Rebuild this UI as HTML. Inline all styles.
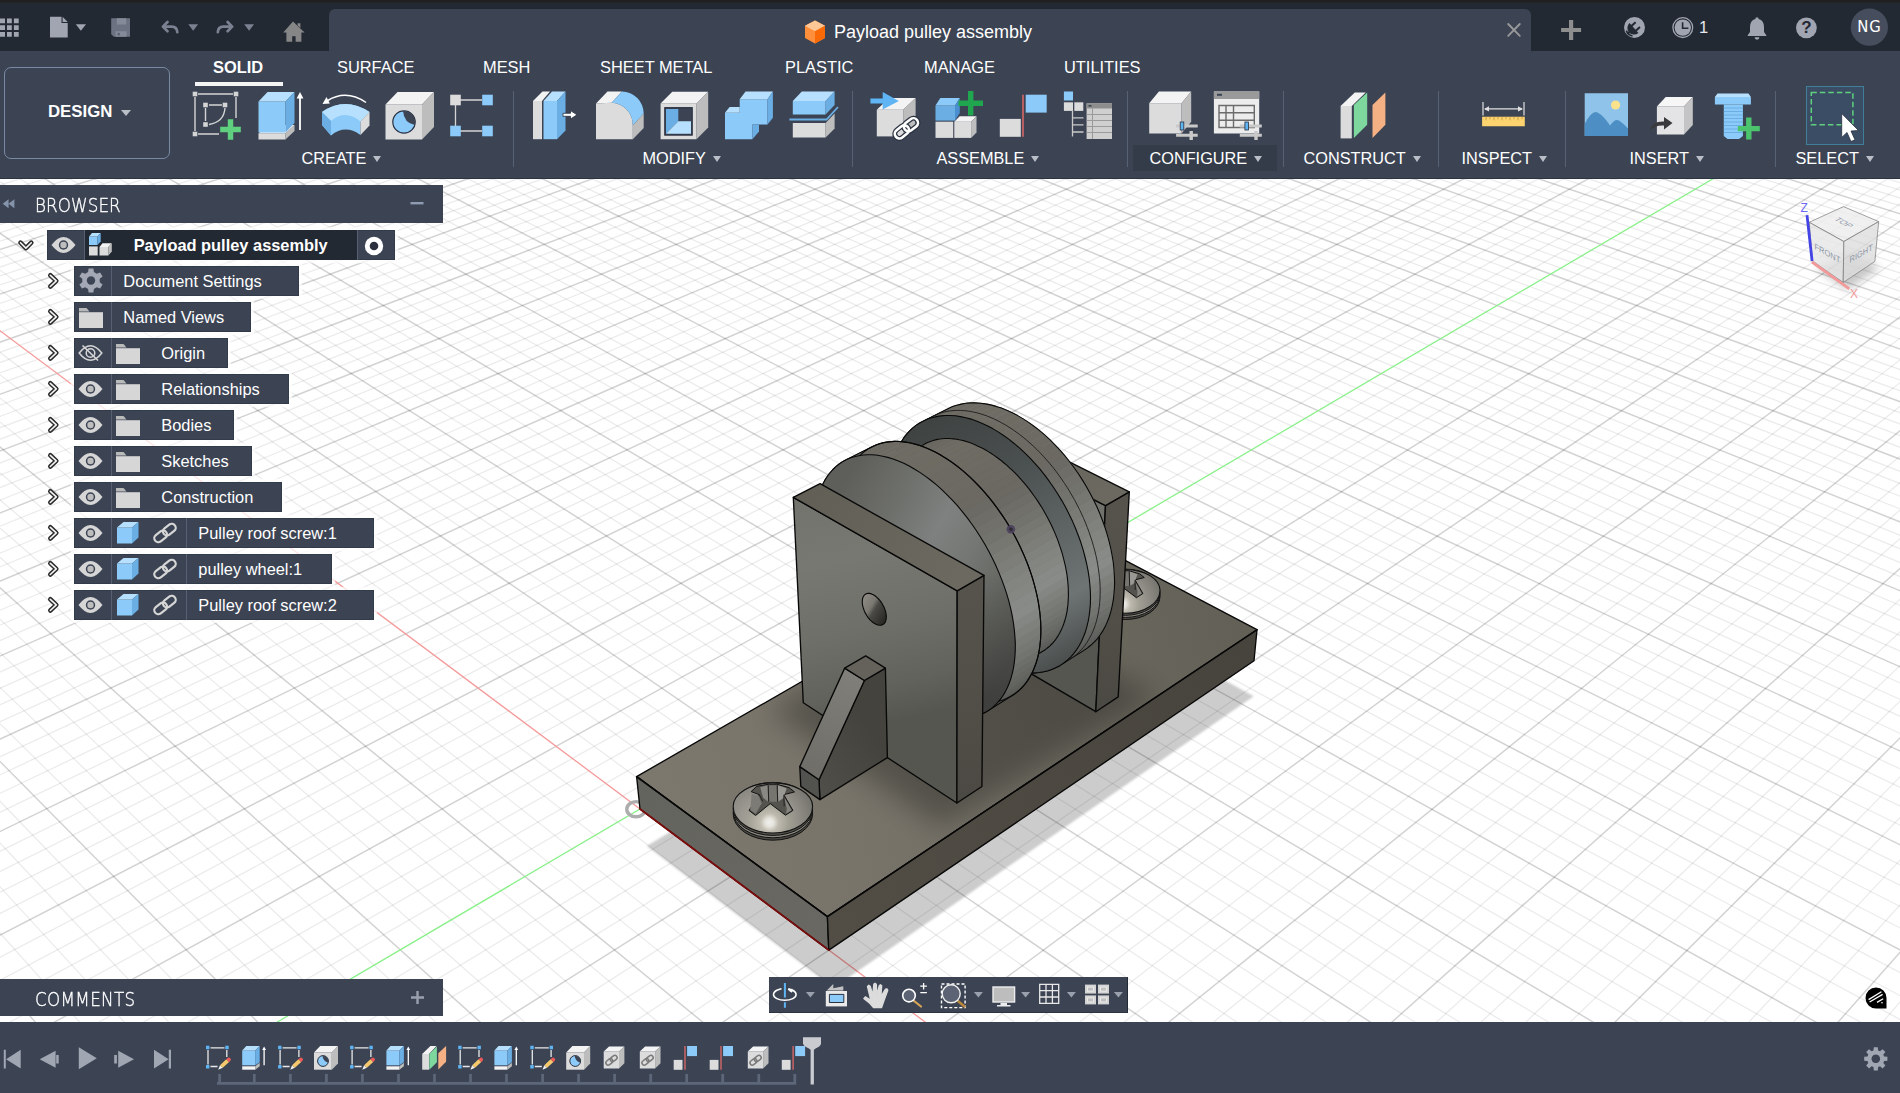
<!DOCTYPE html>
<html lang="en"><head><meta charset="utf-8"><title>Payload pulley assembly</title>
<style>
*{box-sizing:border-box}
html,body{margin:0;padding:0;overflow:hidden}
body{width:1900px;height:1093px;overflow:hidden;background:#fff;font-family:"Liberation Sans",sans-serif;color:#fff;position:relative}
.abs{position:absolute}
#strip{left:0;top:0;width:1900px;height:3px;background:linear-gradient(#202020 0,#202020 70%,#22272e 100%)}
#titlebar{left:0;top:3px;width:1900px;height:48px;background:#222933}
#tab{left:329px;top:9px;width:1202px;height:43px;background:#3c4454;border-radius:6px 6px 0 0}
#toolbar{left:0;top:51px;width:1900px;height:128px;background:#3c4454;border-bottom:1px solid #2d3441}
#doctitle{left:834px;top:21px;font-size:18px;line-height:22px;color:#fff;white-space:nowrap}
.wtab{position:absolute;top:56.6px;font-size:16.4px;line-height:20px;color:#fff;white-space:nowrap}
.glabel{position:absolute;top:148.4px;font-size:16.3px;margin-left:-0.5px;line-height:20px;color:#fff;white-space:nowrap}
.glabel i{display:inline-block;width:0;height:0;border-left:4.5px solid transparent;border-right:4.5px solid transparent;border-top:6px solid #b9bec7;margin-left:7px;vertical-align:2px}
.sep{position:absolute;top:91px;width:1px;height:76px;background:#566173}
.ico{position:absolute;overflow:visible}
#viewport{left:0;top:179px;width:1900px;height:843px;background:#fff;overflow:hidden}
#timeline{left:0;top:1022px;width:1900px;height:71px;background:#3c4454}
.panelhdr{position:absolute;left:0;width:443px;background:#3c4454;color:#fff;font-size:17px;letter-spacing:1px}
.row{position:absolute;height:30px;background:#3c4454;box-shadow:inset 0 0 0 1px #323b4a,0 0 1px 3px rgba(255,255,255,.72);font-size:16.4px;line-height:30px;color:#fff;white-space:nowrap}
.row .c{position:absolute;top:0;height:30px}
.row .t{position:absolute;top:0;height:30px;line-height:30px}
.cond{font-family:"DejaVu Sans Light","DejaVu Sans Condensed","Liberation Sans",sans-serif;transform:scaleX(.9);transform-origin:0 50%;-webkit-text-stroke:.35px #fff}
.chev{position:absolute;width:14px;height:20px}
</style></head><body>
<div id="strip" class="abs"></div>
<div id="titlebar" class="abs"></div>
<div id="tab" class="abs"></div>
<div id="toolbar" class="abs"></div>
<div id="doctitle" class="abs">Payload pulley assembly</div>
<svg class="abs" style="left:0;top:0" width="1900" height="52" viewBox="0 0 1900 52">
<g fill="#a1a5b1">
<path d="M0 18.5h5v4.7h-5zM7 18.5h4.8v4.7h-4.8zM13.9 18.5h4.8v4.7h-4.8zM0 25.3h5v4.7h-5zM7 25.3h4.8v4.7h-4.8zM13.9 25.3h4.8v4.7h-4.8zM0 32.1h5v4.7h-5zM7 32.1h4.8v4.7h-4.8zM13.9 32.1h4.8v4.7h-4.8z"/>
<path d="M50 16.8h11.5v6.2h6.2v14.4h-17.7zM62.6 16.8l5.1 5.1h-5.1z"/>
<path d="M75.8 24.2h10.2l-5.1 6.6z"/>
</g>
<g><path d="M111.200 18.200h18.800v18.600h-16.200l-2.600-2.600z" fill="#6d7282"/><path d="M116.800 18.200h9.400v6.400h-9.400zM115.600 31.200h11v5.600h-11z" fill="#858a99"/><rect x="117.600" y="32.800" width="2.200" height="2.600" fill="#5a5f6e"/></g>
<g fill="none" stroke="#7c8191" stroke-width="2.7" stroke-linejoin="round" stroke-linecap="round">
<path d="M167.5 22l-4.6 4.6 4.6 4.6M163.5 26.6h8.2q5.4.2 5.6 5.6"/>
<path d="M227.6 22l4.6 4.6-4.6 4.6M231.6 26.6h-8.2q-5.4.2-5.6 5.6"/>
</g>
<g fill="#7c8191"><path d="M188.3 24.2h9.8l-4.9 6.6zM244.2 24.2h9.8l-4.9 6.6z"/></g>
<path d="M293 21.400L304.600 32.600h-3.200v9.200h-5.800v-5.600h-3.400v5.600h-5.800v-9.200h-3.200zM297.600 23.200h2.800v4.800l-2.800-2.700z" fill="#868686"/>
<!-- right side icons -->
<g stroke="#9a9a9a" stroke-width="1.800" stroke-linecap="round"><path d="M1508.200 24l11.600 11.800M1519.800 24l-11.600 11.800"/></g>
<path d="M1569 20h4.200v7.900h7.900v4.200h-7.900v7.900h-4.200v-7.900h-7.900v-4.200h7.900z" fill="#8e8e8e"/>
<circle cx="1634.500" cy="27.400" r="10.500" fill="#a1a5b1"/>
<g transform="translate(1634 28) rotate(-42)" fill="#222933"><path d="M0 -6.600A6.600 6.600 0 0 0 0 6.600Z"/><rect x="-0.500" y="-4.300" width="5.600" height="2.100"/><rect x="-0.500" y="2.200" width="5.600" height="2.100"/><rect x="-9" y="-1" width="3" height="2"/></g>
<path d="M1626.300 30.600A8.700 8.700 0 0 0 1632.500 36" stroke="#222933" stroke-width="1.600" fill="none"/>
<circle cx="1682.800" cy="27.600" r="9.900" fill="none" stroke="#a1a5b1" stroke-width="1.300"/>
<circle cx="1682.800" cy="27.600" r="8.200" fill="#a1a5b1"/>
<path d="M1682.600 22.200v6h5.800" stroke="#222933" stroke-width="1.600" fill="none"/>
<path d="M1757 17.200a1.700 1.700 0 0 1 1.700 1.700q5.300 1.500 5.300 8v5.200l2.300 3.100v.9h-18.600v-.9l2.300-3.100v-5.200q0-6.500 5.300-8a1.700 1.700 0 0 1 1.700-1.700zM1754.600 37.300h4.800a2.400 2.400 0 0 1-4.800 0z" fill="#a1a5b1"/>
<circle cx="1806.400" cy="27.800" r="10.400" fill="#a1a5b1"/>
<circle cx="1869.400" cy="27.200" r="18.600" fill="#464e5e"/>
</svg>
<div class="abs" style="left:1699px;top:17px;font-size:16.500px;line-height:20px;color:#e8e8ec">1</div>
<div class="abs" style="left:1800px;top:17px;width:13px;text-align:center;font-size:17px;line-height:21px;font-weight:bold;color:#222933">?</div>
<div class="abs" style="left:1851px;top:16px;width:37px;text-align:center;font-size:16.500px;line-height:22px;color:#fff;letter-spacing:1px;font-family:'DejaVu Sans Condensed','Liberation Sans',sans-serif">NG</div>
<svg class="abs" style="left:803px;top:19px" width="24" height="26" viewBox="0 0 24 26"><path d="M12 1.500L22 6.800V19L12 24.500L2 19V6.800Z" fill="#ff8f3a"/><path d="M12 1.500L22 6.800L12 12.200L2 6.800Z" fill="#ffc696"/><path d="M12 12.200L22 6.800V19L12 24.500Z" fill="#f96a06"/></svg>
<div class="abs" style="left:4px;top:66.500px;width:166px;height:92px;border:1px solid #788aa3;border-radius:7px"></div>
<div class="abs" style="left:48px;top:101.500px;font-size:16.800px;line-height:20px;font-weight:bold;color:#fff">DESIGN</div>
<div class="abs" style="left:121px;top:110px;width:0;height:0;border-left:5px solid transparent;border-right:5px solid transparent;border-top:6px solid #b9bec7"></div>
<div class="wtab" style="left:213px;font-weight:bold;">SOLID</div>
<div class="wtab" style="left:337px;">SURFACE</div>
<div class="wtab" style="left:483px;">MESH</div>
<div class="wtab" style="left:600px;">SHEET METAL</div>
<div class="wtab" style="left:785px;">PLASTIC</div>
<div class="wtab" style="left:924px;">MANAGE</div>
<div class="wtab" style="left:1064px;">UTILITIES</div>
<div class="abs" style="left:195px;top:82px;width:88px;height:4px;background:#f4f4f4"></div>
<div class="abs" style="left:1133px;top:145px;width:144px;height:26px;background:#343c4a"></div>
<div class="glabel" style="left:302px">CREATE<i></i></div>
<div class="glabel" style="left:643px">MODIFY<i></i></div>
<div class="glabel" style="left:937px">ASSEMBLE<i></i></div>
<div class="glabel" style="left:1150px">CONFIGURE<i></i></div>
<div class="glabel" style="left:1304px">CONSTRUCT<i></i></div>
<div class="glabel" style="left:1462px">INSPECT<i></i></div>
<div class="glabel" style="left:1630px">INSERT<i></i></div>
<div class="glabel" style="left:1796px">SELECT<i></i></div>
<div class="sep" style="left:513px"></div>
<div class="sep" style="left:852px"></div>
<div class="sep" style="left:1127px"></div>
<div class="sep" style="left:1283px"></div>
<div class="sep" style="left:1438px"></div>
<div class="sep" style="left:1565px"></div>
<div class="sep" style="left:1775px"></div>
<div class="abs" style="left:1806px;top:86px;width:58px;height:59px;background:#3a4d64;border:1px solid #3f7f98"></div>
<svg class="abs" style="left:0;top:0" width="1900" height="179" viewBox="0 0 1900 179"><path d="M198 94H233M195 97V131M236 97V118M198 134H219" stroke="#d4d4d4" stroke-width="1.4" fill="none"/><rect x="192.7" y="91.7" width="4.6" height="4.6" fill="#d4d4d4"/><rect x="233.7" y="91.7" width="4.6" height="4.6" fill="#d4d4d4"/><rect x="192.7" y="131.7" width="4.6" height="4.6" fill="#d4d4d4"/><path d="M209 105H222M205.5 108V121M225 108Q224 122 209 124.5" stroke="#d4d4d4" stroke-width="1.4" fill="none"/><rect x="203.2" y="102.7" width="4.6" height="4.6" fill="#d4d4d4"/><rect x="222.7" y="102.7" width="4.6" height="4.6" fill="#d4d4d4"/><rect x="203.2" y="122.2" width="4.6" height="4.6" fill="#d4d4d4"/><path d="M227.8 119.2h5.4v7.6h7.6v5.4h-7.6v7.6h-5.4v-7.6h-7.6v-5.4h7.6z" fill="#5fd17e"/><polygon points="258.5,133.5 285.5,133.5 285.5,139.5 258.5,139.5" fill="#dcdcdc" /><polygon points="258.5,133.5 267.5,125.0 294.5,125.0 285.5,133.5" fill="#f3f3f3" /><polygon points="285.5,133.5 294.5,125.0 294.5,131.0 285.5,139.5" fill="#bdbdbd" /><polygon points="258.5,101.5 285.5,101.5 285.5,132.5 258.5,132.5" fill="#8ccbf9" /><polygon points="258.5,101.5 267.5,92.0 294.5,92.0 285.5,101.5" fill="#b6e0fd" /><polygon points="285.5,101.5 294.5,92.0 294.5,123.0 285.5,132.5" fill="#6aaee4" /><path d="M300 130V97" stroke="#fff" stroke-width="1.8"/><path d="M296.6 98.5L300 92L303.4 98.5Z" fill="#fff"/><path d="M322 112Q345 96 369.5 112L360.5 121.5V135Q345 124 331 135.5L322 125Z" fill="#8ccbf9"/><path d="M322 112Q345 96 369.5 112L360.5 121.5Q345 109 331 121Z" fill="#b6e0fd"/><path d="M322 112L331 121V135.5L322 125Z" fill="#6aaee4"/><path d="M360.5 121.5L369.5 112V125.5L360.5 135Z" fill="#dcdcdc"/><path d="M327 101Q346 89 366 102.5" stroke="#fff" stroke-width="1.5" fill="none"/><path d="M322.5 104L326.5 97L329.8 103.5Z" fill="#fff"/><polygon points="385.5,104.5 422.0,104.5 422.0,139.5 385.5,139.5" fill="#dcdcdc" /><polygon points="385.5,104.5 397.5,92.0 434.0,92.0 422.0,104.5" fill="#f3f3f3" /><polygon points="422.0,104.5 434.0,92.0 434.0,127.0 422.0,139.5" fill="#bdbdbd" /><circle cx="404" cy="122" r="11.2" fill="#8ccbf9" stroke="#2a3140" stroke-width="1.2"/><path d="M403 111Q404 123 414.8 125A11.2 11.2 0 0 0 403 111Z" fill="#3c4454"/><path d="M456 100H482M456 131H482M455.5 105V126" stroke="#d4d4d4" stroke-width="1.3" fill="none"/><rect x="450.2" y="94.7" width="10.6" height="10.6" fill="#dcdcdc"/><rect x="482.2" y="94.7" width="10.6" height="10.6" fill="#8ccbf9"/><rect x="450.2" y="125.7" width="10.6" height="10.6" fill="#8ccbf9"/><rect x="482.2" y="125.7" width="10.6" height="10.6" fill="#8ccbf9"/><polygon points="533.0,101.0 542.0,101.0 542.0,139.2 533.0,139.2" fill="#dcdcdc" /><polygon points="533.0,101.0 542.5,91.5 550.0,91.5 542.0,101.0" fill="#f3f3f3" /><polygon points="543.5,101.0 557.0,101.0 557.0,139.2 543.5,139.2" fill="#8ccbf9" /><polygon points="543.5,101.0 552.0,91.5 565.5,91.5 557.0,101.0" fill="#b6e0fd" /><polygon points="557.0,101.0 565.5,91.5 565.5,130.5 557.0,139.2" fill="#6aaee4" /><path d="M563 113.3H570.5V110.6L577 114.8L570.5 119V116.3H563Z" fill="#fff" stroke="#2a3140" stroke-width="0.8"/><path d="M596 139.2V103.5L611.7 102.7A22 22 0 0 1 632.8 125.4V139.2Z" fill="#dcdcdc"/><polygon points="596.0,103.5 607.5,91.5 621.8,91.5 611.7,102.7" fill="#f3f3f3" /><path d="M611.7 102.7L621.8 91.5A22 22 0 0 1 643.7 113.6L632.8 125.4A22 22 0 0 0 611.7 102.7Z" fill="#8ccbf9"/><polygon points="632.8,125.4 643.7,113.6 643.7,128.0 632.8,139.2" fill="#bdbdbd" /><polygon points="660.6,103.5 696.5,103.5 696.5,139.2 660.6,139.2" fill="#dcdcdc" /><polygon points="660.6,103.5 672.3,91.7 708.2,91.7 696.5,103.5" fill="#f3f3f3" /><polygon points="696.5,103.5 708.2,91.7 708.2,127.4 696.5,139.2" fill="#bdbdbd" /><rect x="664.8" y="107.7" width="27.4" height="27.4" fill="#3c4454" stroke="#2a3140" stroke-width="1.2"/><polygon points="666.0,109.0 678.3,109.0 678.3,121.2 666.0,133.8" fill="#6aaee4" /><polygon points="666.0,133.8 678.3,121.2 691.0,121.2 691.0,133.8" fill="#b6e0fd" /><polygon points="725.0,112.8 739.7,112.8 739.7,99.3 767.5,99.3 767.5,124.6 752.4,124.6 752.4,139.2 725.0,139.2" fill="#8ccbf9" /><polygon points="739.7,99.3 745.6,91.5 772.9,91.5 767.5,99.3" fill="#b6e0fd" /><polygon points="725.0,112.8 729.6,106.9 739.7,106.9 739.7,112.8" fill="#b6e0fd" /><polygon points="767.5,99.3 772.9,91.5 772.9,117.8 767.5,124.6" fill="#6aaee4" /><polygon points="752.4,124.6 759.0,124.6 759.0,131.5 752.4,139.2" fill="#6aaee4" /><polygon points="792.8,122.9 825.6,122.9 825.6,137.5 792.8,137.5" fill="#dcdcdc" /><polygon points="825.6,122.9 834.6,113.6 834.6,128.5 825.6,137.5" fill="#bdbdbd" /><polygon points="792.8,101.0 825.6,101.0 825.6,114.5 792.8,114.5" fill="#8ccbf9" /><polygon points="792.8,101.0 801.8,91.5 834.6,91.5 825.6,101.0" fill="#b6e0fd" /><polygon points="825.6,101.0 834.6,91.5 834.6,105.0 825.6,114.5" fill="#6aaee4" /><path d="M789.4 119.5H826.5L838 107" stroke="#6aaee4" stroke-width="1.8" fill="none"/><polygon points="876.8,109.8 903.2,109.8 903.2,136.4 876.8,136.4" fill="#dcdcdc" /><polygon points="876.8,109.8 889.2,98.0 915.6,98.0 903.2,109.8" fill="#f3f3f3" /><polygon points="903.2,109.8 915.6,98.0 915.6,124.6 903.2,136.4" fill="#bdbdbd" /><path d="M870.4 98.4H882.7V92L898.8 101L882.7 109.5V103.4H870.4Z" fill="#5fb4f3"/><g transform="translate(906.400 128.300) rotate(-38)" fill="none"><rect x="-13.500" y="-4.600" width="15.500" height="9.200" rx="4.600" stroke="#2a3140" stroke-width="5"/><rect x="-2" y="-4.600" width="15.500" height="9.200" rx="4.600" stroke="#2a3140" stroke-width="5"/><rect x="-13.500" y="-4.600" width="15.500" height="9.200" rx="4.600" stroke="#fff" stroke-width="2.600"/><rect x="-2" y="-4.600" width="15.500" height="9.200" rx="4.600" stroke="#fff" stroke-width="2.600"/></g><polygon points="935.5,121.7 953.2,121.7 953.2,137.9 935.5,137.9" fill="#dcdcdc" /><polygon points="954.3,121.7 971.1,121.7 971.1,137.9 954.3,137.9" fill="#dcdcdc" /><polygon points="954.3,121.7 959.7,116.3 976.5,116.3 971.1,121.7" fill="#f3f3f3" /><polygon points="971.1,121.7 976.5,116.3 976.5,132.5 971.1,137.9" fill="#bdbdbd" /><polygon points="935.5,105.5 955.0,105.5 955.0,120.6 935.5,120.6" fill="#6aaee4" /><polygon points="935.5,105.5 940.3,98.0 959.8,98.0 955.0,105.5" fill="#8ccbf9" /><polygon points="955.0,105.5 959.8,98.0 959.8,113.1 955.0,120.6" fill="#4a8fcf" /><path d="M968.0 91.0h5.4v9.6h9.6v5.4h-9.6v9.6h-5.4v-9.6h-9.6v-5.4h9.6z" fill="#1fa64f"/><polygon points="999.8,118.9 1020.8,118.9 1020.8,136.8 999.8,136.8" fill="#dcdcdc" /><polygon points="1025.7,94.7 1046.7,94.7 1046.7,112.6 1025.7,112.6" fill="#8ccbf9" /><path d="M1023 94.7V136.8" stroke="#e06a6a" stroke-width="1.5"/><polygon points="1063.9,91.5 1073.0,91.5 1073.0,100.5 1063.9,100.5" fill="#8ccbf9" /><polygon points="1063.9,102.3 1073.0,102.3 1073.0,110.9 1063.9,110.9" fill="#dcdcdc" /><polygon points="1074.3,102.3 1083.3,102.3 1083.3,110.9 1074.3,110.9" fill="#dcdcdc" /><path d="M1072.5 111V136.5M1072.5 117.8H1083.5M1072.5 124.9H1083.5M1072.5 132H1083.5" stroke="#c9c9c9" stroke-width="1.3" fill="none"/><polygon points="1086.6,103.3 1112.0,103.3 1112.0,139.0 1086.6,139.0" fill="#cfcfcf" /><polygon points="1086.6,103.3 1112.0,103.3 1112.0,108.5 1086.6,108.5" fill="#8d8d8d" /><path d="M1086.6 114.5H1112M1086.6 120.5H1112M1086.6 126.5H1112M1086.6 132.5H1112M1092.5 108.5V139" stroke="#9a9a9a" stroke-width="1" fill="none"/><rect x="1088.5" y="105" width="3" height="1.6" fill="#3c4454"/><polygon points="1149.2,103.3 1181.5,103.3 1181.5,133.6 1149.2,133.6" fill="#dcdcdc" /><polygon points="1149.2,103.3 1158.9,91.5 1191.2,91.5 1181.5,103.3" fill="#f3f3f3" /><polygon points="1181.5,103.3 1191.2,91.5 1191.2,121.8 1181.5,133.6" fill="#bdbdbd" /><path d="M1176.1 126H1197.7M1176.1 135.3H1197.7" stroke="#c9c9c9" stroke-width="3" fill="none"/><rect x="1180.2" y="122" width="3.600" height="8" fill="#5fb4f3" stroke="#2a3140" stroke-width="0.8"/><rect x="1189.5" y="131" width="3.4" height="9" fill="#c9c9c9"/><polygon points="1213.9,91.5 1259.2,91.5 1259.2,133.6 1213.9,133.6" fill="#ececec" /><polygon points="1213.9,91.5 1259.2,91.5 1259.2,99.0 1213.9,99.0" fill="#9a9a9a" /><rect x="1217" y="93.8" width="5" height="2" fill="#3c4454"/><path d="M1219 105.5H1254.3V127.5H1219ZM1219 112.8H1254.3M1219 120.2H1254.3M1226 105.5V127.5M1233.5 105.5V127.5" stroke="#6b6b6b" stroke-width="1.4" fill="none"/><path d="M1239.8 126H1261.8M1239.8 135.3H1261.8" stroke="#c9c9c9" stroke-width="3" fill="none"/><rect x="1244.9" y="122" width="3.600" height="8" fill="#5fb4f3" stroke="#2a3140" stroke-width="0.8"/><rect x="1254.3" y="131" width="3.4" height="9" fill="#c9c9c9"/><polygon points="1340.6,105.9 1351.8,105.9 1351.8,138.4 1340.6,138.4" fill="#dcdcdc" /><polygon points="1340.6,105.9 1354.8,92.4 1365.7,92.4 1351.8,105.9" fill="#f3f3f3" /><polygon points="1353.9,105.0 1367.2,92.4 1367.2,124.8 1353.9,138.0" fill="#7ed89e" /><polygon points="1372.5,105.0 1385.4,92.4 1385.4,124.8 1372.5,138.0" fill="#f5b183" /><path d="M1483 102V115.5M1524 102V115.5M1485 108.9H1522" stroke="#e0e0e0" stroke-width="1.2" fill="none"/><path d="M1484 108.9l5-2.6v5.2zM1523 108.9l-5-2.6v5.2z" fill="#e0e0e0"/><polygon points="1482.1,116.8 1524.8,116.8 1524.8,126.3 1482.1,126.3" fill="#fcd36e" /><path d="M1486 116.8v3.5M1490 116.8v2.5M1494 116.8v3.5M1498 116.8v2.5M1502 116.8v3.5M1506 116.8v2.5M1510 116.8v3.5M1514 116.8v2.5M1518 116.8v3.5M1522 116.8v2.5" stroke="#c9a040" stroke-width="1"/><polygon points="1584.7,93.3 1628.0,93.3 1628.0,136.0 1584.7,136.0" fill="#8fc3ea" /><path d="M1584.7 124Q1592 110 1597.5 112.5Q1603 115 1610 125.5Q1615 118 1619 120.5Q1623 123 1628 128.5V136H1584.7Z" fill="#4d8fc4"/><circle cx="1615.6" cy="105" r="4.6" fill="#fbe38e"/><polygon points="1656.9,106.5 1684.0,106.5 1684.0,134.5 1656.9,134.5" fill="#e4e4e6" /><polygon points="1656.9,106.5 1665.7,97.1 1692.8,97.1 1684.0,106.5" fill="#f6f6f6" /><polygon points="1684.0,106.5 1692.8,97.1 1692.8,125.1 1684.0,134.5" fill="#c4c4c6" /><path d="M1650 130.5Q1652 121 1664 121.5V117L1672.5 123L1664 129.5V125.5Q1655 125 1650 130.5Z" fill="#3a3a3c"/><polygon points="1714.9,97.0 1750.9,97.0 1750.9,104.5 1714.9,104.5" fill="#8ccbf9" /><polygon points="1714.9,97.0 1717.5,93.6 1748.5,93.6 1750.9,97.0" fill="#b6e0fd" /><polygon points="1723.8,104.5 1742.9,104.5 1742.9,136.0 1739.0,139.0 1727.5,139.0 1723.8,136.0" fill="#8ccbf9" /><path d="M1723.8 108H1742.9M1723.8 111.5H1742.9M1723.8 115H1742.9M1723.8 118.5H1742.9M1723.8 122H1742.9M1723.8 125.5H1742.9M1723.8 129H1742.9M1723.8 132.5H1742.9" stroke="#6aaee4" stroke-width="1"/><path d="M1746.1 117.6h5.4v8.3h8.3v5.4h-8.3v8.3h-5.4v-8.3h-8.3v-5.4h8.3z" fill="#4cc46e"/><rect x="1811.3" y="92.4" width="41.6" height="32.4" fill="none" stroke="#5fd17e" stroke-width="1.5" stroke-dasharray="5.5 3"/><path d="M1841.7 113.5V137.5L1847 132.5L1851 141.5L1855 139.8L1851 131L1858.5 130.5Z" fill="#fff" stroke="#2a3140" stroke-width="0.8"/></svg>
<div id="viewport" class="abs">
<svg class="abs" style="left:0;top:0" width="1900" height="843" viewBox="0 0 1900 843">
<path d="M-2.0 -0.9L1.6 -2.0M-2.0 6.6L26.4 -2.0M-2.0 14.3L51.2 -2.0M-2.0 22.1L76.0 -2.0M-2.0 38.0L125.6 -2.0M-2.0 46.1L150.4 -2.0M-2.0 54.4L175.3 -2.0M-2.0 62.7L200.1 -2.0M-2.0 79.9L249.7 -2.0M-2.0 88.6L274.6 -2.0M-2.0 97.5L299.4 -2.0M-2.0 106.5L324.2 -2.0M-2.0 125.0L373.9 -2.0M-2.0 134.5L398.7 -2.0M-2.0 144.1L423.5 -2.0M-2.0 153.9L448.4 -2.0M-2.0 173.9L498.0 -2.0M-2.0 184.2L522.9 -2.0M-2.0 194.6L547.7 -2.0M-2.0 205.2L572.5 -2.0M-2.0 226.9L622.2 -2.0M-2.0 238.1L647.0 -2.0M-2.0 249.5L671.9 -2.0M-2.0 261.0L696.7 -2.0M-2.0 284.7L746.4 -2.0M-2.0 296.9L771.2 -2.0M-2.0 309.3L796.1 -2.0M-2.0 321.9L820.9 -2.0M-2.0 347.9L870.6 -2.0M-2.0 361.3L895.5 -2.0M-2.0 374.9L920.3 -2.0M-2.0 388.7L945.2 -2.0M-2.0 417.3L994.9 -2.0M-2.0 432.0L1019.7 -2.0M-2.0 447.0L1044.6 -2.0M-2.0 462.3L1069.4 -2.0M-2.0 493.8L1119.2 -2.0M-2.0 510.1L1144.0 -2.0M-2.0 526.7L1168.9 -2.0M-2.0 543.7L1193.7 -2.0M-2.0 578.7L1243.5 -2.0M-2.0 596.8L1268.3 -2.0M-2.0 615.3L1293.2 -2.0M-2.0 634.2L1318.1 -2.0M-2.0 673.3L1367.8 -2.0M-2.0 693.5L1392.7 -2.0M-2.0 714.2L1417.5 -2.0M-2.0 735.5L1442.4 -2.0M-2.0 779.4L1492.1 -2.0M-2.0 802.2L1517.0 -2.0M-2.0 825.6L1541.9 -2.0M6.4 845.0L1566.8 -2.0M95.6 845.0L1616.5 -2.0M140.2 845.0L1641.4 -2.0M184.8 845.0L1666.3 -2.0M229.4 845.0L1691.2 -2.0M318.6 845.0L1740.9 -2.0M363.2 845.0L1765.8 -2.0M407.9 845.0L1790.7 -2.0M452.5 845.0L1815.6 -2.0M541.7 845.0L1865.3 -2.0M586.3 845.0L1890.2 -2.0M630.9 845.0L1902.0 6.7M675.6 845.0L1902.0 23.5M764.8 845.0L1902.0 58.7M809.5 845.0L1902.0 77.2M854.1 845.0L1902.0 96.3M898.7 845.0L1902.0 116.0M988.0 845.0L1902.0 157.6M1032.6 845.0L1902.0 179.5M1077.3 845.0L1902.0 202.2M1121.9 845.0L1902.0 225.8M1211.2 845.0L1902.0 275.6M1255.8 845.0L1902.0 302.0M1300.5 845.0L1902.0 329.4M1345.1 845.0L1902.0 357.9M1434.4 845.0L1902.0 418.6M1479.1 845.0L1902.0 451.0M1523.8 845.0L1902.0 484.8M1568.4 845.0L1902.0 520.1M1657.7 845.0L1902.0 595.8M1702.4 845.0L1902.0 636.4M1747.1 845.0L1902.0 679.0M1791.7 845.0L1902.0 723.8M1881.1 845.0L1902.0 820.8" stroke="#000" stroke-opacity="0.078" stroke-width="1.3" fill="none"/>
<path d="M-2.0 30.0L100.8 -2.0M-2.0 71.2L224.9 -2.0M-2.0 115.7L349.0 -2.0M-2.0 163.8L473.2 -2.0M-2.0 216.0L597.4 -2.0M-2.0 272.8L721.6 -2.0M-2.0 334.8L845.8 -2.0M-2.0 402.9L970.0 -2.0M-2.0 477.9L1094.3 -2.0M-2.0 561.0L1218.6 -2.0M-2.0 653.5L1342.9 -2.0M-2.0 757.2L1467.3 -2.0M51.0 845.0L1591.6 -2.0M497.1 845.0L1840.5 -2.0M720.2 845.0L1902.0 40.8M943.4 845.0L1902.0 136.5M1166.5 845.0L1902.0 250.2M1389.8 845.0L1902.0 387.6M1613.1 845.0L1902.0 557.0M1836.4 845.0L1902.0 771.0" stroke="#000" stroke-opacity="0.175" stroke-width="1.5" fill="none"/>
<path d="M-2.0 751.8L81.4 845.0M-2.0 705.7L126.0 845.0M-2.0 661.9L170.5 845.0M-2.0 620.2L215.0 845.0M-2.0 542.6L304.1 845.0M-2.0 506.4L348.6 845.0M-2.0 471.7L393.2 845.0M-2.0 438.6L437.7 845.0M-2.0 376.5L526.8 845.0M-2.0 347.3L571.3 845.0M-2.0 319.2L615.9 845.0M-2.0 292.3L660.4 845.0M-2.0 241.4L749.6 845.0M-2.0 217.4L794.1 845.0M-2.0 194.2L838.7 845.0M-2.0 171.9L883.2 845.0M-2.0 129.5L972.3 845.0M-2.0 109.4L1016.9 845.0M-2.0 89.9L1061.5 845.0M-2.0 71.1L1106.0 845.0M-2.0 35.2L1195.2 845.0M-2.0 18.1L1239.8 845.0M-2.0 1.5L1284.3 845.0M17.4 -2.0L1328.9 845.0M67.1 -2.0L1418.1 845.0M91.9 -2.0L1462.6 845.0M116.7 -2.0L1507.2 845.0M141.5 -2.0L1551.8 845.0M191.2 -2.0L1641.0 845.0M216.0 -2.0L1685.6 845.0M240.8 -2.0L1730.2 845.0M265.7 -2.0L1774.8 845.0M315.3 -2.0L1864.0 845.0M340.2 -2.0L1902.0 841.5M365.0 -2.0L1902.0 817.7M389.8 -2.0L1902.0 794.6M439.5 -2.0L1902.0 749.9M464.3 -2.0L1902.0 728.4M489.2 -2.0L1902.0 707.3M514.0 -2.0L1902.0 686.8M563.7 -2.0L1902.0 647.1M588.5 -2.0L1902.0 627.9M613.4 -2.0L1902.0 609.2M638.2 -2.0L1902.0 590.8M687.9 -2.0L1902.0 555.3M712.7 -2.0L1902.0 538.1M737.6 -2.0L1902.0 521.3M762.4 -2.0L1902.0 504.8M812.1 -2.0L1902.0 472.8M837.0 -2.0L1902.0 457.3M861.8 -2.0L1902.0 442.1M886.7 -2.0L1902.0 427.2M936.4 -2.0L1902.0 398.3M961.3 -2.0L1902.0 384.3M986.1 -2.0L1902.0 370.5M1011.0 -2.0L1902.0 357.0M1060.7 -2.0L1902.0 330.7M1085.6 -2.0L1902.0 317.9M1110.4 -2.0L1902.0 305.3M1135.3 -2.0L1902.0 293.0M1185.0 -2.0L1902.0 269.0M1209.9 -2.0L1902.0 257.3M1234.7 -2.0L1902.0 245.8M1259.6 -2.0L1902.0 234.5M1309.3 -2.0L1902.0 212.5M1334.2 -2.0L1902.0 201.8M1359.1 -2.0L1902.0 191.2M1384.0 -2.0L1902.0 180.9M1433.7 -2.0L1902.0 160.6M1458.6 -2.0L1902.0 150.7M1483.5 -2.0L1902.0 141.0M1508.3 -2.0L1902.0 131.5M1558.1 -2.0L1902.0 112.8M1583.0 -2.0L1902.0 103.6M1607.9 -2.0L1902.0 94.7M1632.7 -2.0L1902.0 85.8M1682.5 -2.0L1902.0 68.5M1707.4 -2.0L1902.0 60.0M1732.3 -2.0L1902.0 51.7M1757.2 -2.0L1902.0 43.5M1807.0 -2.0L1902.0 27.4M1831.8 -2.0L1902.0 19.6M1856.7 -2.0L1902.0 11.8M1881.6 -2.0L1902.0 4.2" stroke="#000" stroke-opacity="0.078" stroke-width="1.3" fill="none"/>
<path d="M-2.0 800.4L36.9 845.0M-2.0 580.5L259.6 845.0M-2.0 406.9L482.3 845.0M-2.0 266.4L705.0 845.0M-2.0 52.9L1150.6 845.0M42.3 -2.0L1373.5 845.0M166.4 -2.0L1596.4 845.0M290.5 -2.0L1819.4 845.0M414.7 -2.0L1902.0 772.0M538.8 -2.0L1902.0 666.7M663.1 -2.0L1902.0 572.9M787.3 -2.0L1902.0 488.6M911.6 -2.0L1902.0 412.6M1035.8 -2.0L1902.0 343.7M1160.1 -2.0L1902.0 280.9M1284.5 -2.0L1902.0 223.4M1408.8 -2.0L1902.0 170.7M1533.2 -2.0L1902.0 122.0M1657.6 -2.0L1902.0 77.1M1782.1 -2.0L1902.0 35.4" stroke="#000" stroke-opacity="0.175" stroke-width="1.5" fill="none"/>
<path d="M-2.0 150.3L927.8 845.0" stroke="#f59a9a" stroke-width="1.3"/>
<path d="M274.0 845.0L1716.0 -2.0" stroke="#8af08a" stroke-width="1.3"/>
</svg>
<svg class="abs" style="left:0;top:0" width="1900" height="843" viewBox="0 179 1900 843">
<defs><filter id="blur" x="-10%" y="-10%" width="120%" height="120%"><feGaussianBlur stdDeviation="1.3"/></filter><linearGradient id="gPlateTop" gradientUnits="userSpaceOnUse" x1="636.6" y1="776.6" x2="1257.0" y2="629.7"><stop offset="0" stop-color="#7c786d"/><stop offset="0.3" stop-color="#78746a"/><stop offset="0.65" stop-color="#6d6a60"/><stop offset="1" stop-color="#625f56"/></linearGradient><linearGradient id="gPlateFront" gradientUnits="userSpaceOnUse" x1="640.0" y1="809.0" x2="828.8" y2="950.1"><stop offset="0" stop-color="#64645f"/><stop offset="1" stop-color="#696863"/></linearGradient><linearGradient id="gPlateRight" gradientUnits="userSpaceOnUse" x1="828.8" y1="950.1" x2="1254.0" y2="660.8"><stop offset="0" stop-color="#524e46"/><stop offset="1" stop-color="#47443d"/></linearGradient><filter id="ao" x="-20%" y="-20%" width="140%" height="140%"><feGaussianBlur stdDeviation="14"/></filter><clipPath id="cpTop"><polygon points="636.6,776.6 827.4,916.6 1257.0,629.7 1066.1,529.4"/></clipPath><radialGradient id="s2d" gradientUnits="userSpaceOnUse" cx="1122.5" cy="604.1" r="40.0"><stop offset="0" stop-color="#ffffff"/><stop offset="0.09" stop-color="#f3f1ea"/><stop offset="0.2" stop-color="#c4c0b4"/><stop offset="0.42" stop-color="#a3a095"/><stop offset="0.7" stop-color="#8d8b84"/><stop offset="1" stop-color="#77766f"/></radialGradient><linearGradient id="s2l" gradientUnits="userSpaceOnUse" x1="1090.9" y1="590.2" x2="1160.0" y2="590.2"><stop offset="0" stop-color="#d9d9d4"/><stop offset="0.18" stop-color="#bcbab2"/><stop offset="0.4" stop-color="#9f9c92"/><stop offset="0.75" stop-color="#8f8e87"/><stop offset="1" stop-color="#6d6c66"/></linearGradient><linearGradient id="rbF" gradientUnits="userSpaceOnUse" x1="941.6" y1="422.2" x2="988.3" y2="648.7"><stop offset="0" stop-color="#73736e"/><stop offset="0.3" stop-color="#787873"/><stop offset="0.6" stop-color="#6f6f6a"/><stop offset="0.85" stop-color="#62625d"/><stop offset="1" stop-color="#565651"/></linearGradient><linearGradient id="rbR" gradientUnits="userSpaceOnUse" x1="1105.5" y1="505.6" x2="1095.8" y2="711.7"><stop offset="0" stop-color="#56534c"/><stop offset="0.5" stop-color="#524f48"/><stop offset="1" stop-color="#4b4943"/></linearGradient><linearGradient id="rbT" gradientUnits="userSpaceOnUse" x1="941.6" y1="422.2" x2="1105.5" y2="505.6"><stop offset="0" stop-color="#615e56"/><stop offset="1" stop-color="#6c6960"/></linearGradient><linearGradient id="gFi" gradientUnits="userSpaceOnUse" x1="916.0" y1="425.4" x2="1056.2" y2="667.5"><stop offset="0" stop-color="#3f4342"/><stop offset="0.3" stop-color="#4a4f4f"/><stop offset="0.55" stop-color="#5c6262"/><stop offset="0.8" stop-color="#6e7474"/><stop offset="1" stop-color="#4a4e4d"/></linearGradient><linearGradient id="gCap" gradientUnits="userSpaceOnUse" x1="814.3" y1="532.6" x2="1015.3" y2="649.3"><stop offset="0" stop-color="#5e5f5b"/><stop offset="0.25" stop-color="#6f716d"/><stop offset="0.45" stop-color="#7f8280"/><stop offset="0.62" stop-color="#767975"/><stop offset="0.85" stop-color="#646661"/><stop offset="1" stop-color="#5a5b57"/></linearGradient><linearGradient id="gCapV" gradientUnits="userSpaceOnUse" x1="0" y1="466.1" x2="0" y2="702.5"><stop offset="0" stop-color="#000" stop-opacity="0"/><stop offset="0.45" stop-color="#000" stop-opacity="0.02"/><stop offset="1" stop-color="#000" stop-opacity="0.3"/></linearGradient><linearGradient id="fbF" gradientUnits="userSpaceOnUse" x1="793.3" y1="497.3" x2="849.3" y2="732.7"><stop offset="0" stop-color="#73736e"/><stop offset="0.3" stop-color="#787873"/><stop offset="0.6" stop-color="#6f6f6a"/><stop offset="0.85" stop-color="#62625d"/><stop offset="1" stop-color="#565651"/></linearGradient><linearGradient id="fbR" gradientUnits="userSpaceOnUse" x1="957.2" y1="590.9" x2="956.9" y2="803.0"><stop offset="0" stop-color="#56534c"/><stop offset="0.5" stop-color="#524f48"/><stop offset="1" stop-color="#4b4943"/></linearGradient><linearGradient id="fbT" gradientUnits="userSpaceOnUse" x1="793.3" y1="497.3" x2="957.2" y2="590.9"><stop offset="0" stop-color="#615e56"/><stop offset="1" stop-color="#6c6960"/></linearGradient><linearGradient id="gHole" gradientUnits="userSpaceOnUse" x1="862.2" y1="602.2" x2="886.3" y2="616.6"><stop offset="0" stop-color="#8a8880"/><stop offset="0.35" stop-color="#7a7871"/><stop offset="0.52" stop-color="#4a4944"/><stop offset="1" stop-color="#2b2a27"/></linearGradient><linearGradient id="gGs" gradientUnits="userSpaceOnUse" x1="819.9" y1="799.6" x2="887.4" y2="757.6"><stop offset="0" stop-color="#514f49"/><stop offset="1" stop-color="#45433e"/></linearGradient><linearGradient id="gGl" gradientUnits="userSpaceOnUse" x1="799.8" y1="766.6" x2="844.7" y2="668.1"><stop offset="0" stop-color="#6f6e69"/><stop offset="1" stop-color="#807f79"/></linearGradient><radialGradient id="s1d" gradientUnits="userSpaceOnUse" cx="769.5" cy="822.5" r="46.0"><stop offset="0" stop-color="#ffffff"/><stop offset="0.09" stop-color="#f3f1ea"/><stop offset="0.2" stop-color="#c4c0b4"/><stop offset="0.42" stop-color="#a3a095"/><stop offset="0.7" stop-color="#8d8b84"/><stop offset="1" stop-color="#77766f"/></radialGradient><linearGradient id="s1l" gradientUnits="userSpaceOnUse" x1="733.2" y1="806.5" x2="812.6" y2="806.5"><stop offset="0" stop-color="#d9d9d4"/><stop offset="0.18" stop-color="#bcbab2"/><stop offset="0.4" stop-color="#9f9c92"/><stop offset="0.75" stop-color="#8f8e87"/><stop offset="1" stop-color="#6d6c66"/></linearGradient></defs>
<polygon points="643.8,844.9 830.5,987.0 1250.7,695.2 1063.9,592.6" fill="#000" fill-opacity="0.2" filter="url(#blur)" transform="translate(3 1)"/>
<ellipse cx="636.0" cy="809.2" rx="9.200" ry="7.600" fill="none" stroke="#adadad" stroke-width="3.400"/>
<polygon points="636.6,776.6 827.4,916.6 1257.0,629.7 1066.1,529.4" fill="url(#gPlateTop)" stroke="#080808" stroke-width="1.35" stroke-linejoin="round" />
<polygon points="640.0,809.0 828.8,950.1 827.4,916.6 636.6,776.6" fill="url(#gPlateFront)" stroke="#080808" stroke-width="1.35" stroke-linejoin="round" />
<polygon points="828.8,950.1 1254.0,660.8 1257.0,629.7 827.4,916.6" fill="url(#gPlateRight)" stroke="#080808" stroke-width="1.35" stroke-linejoin="round" />
<polyline points="640.0,809.0 828.8,950.1" fill="none" stroke="#7d0c0c" stroke-width="1.8" stroke-linejoin="round" stroke-linecap="round" />
<g clip-path="url(#cpTop)"><polygon points="768.9,711.6 941.5,826.6 1156.4,696.9 964.5,587.9" fill="#000" fill-opacity="0.28" filter="url(#ao)"/></g>
<polyline points="636.6,776.6 827.4,916.6 1257.0,629.7" fill="none" stroke="#080808" stroke-width="1.35" stroke-linejoin="round" stroke-linecap="round" />
<g><ellipse cx="1125.5" cy="596.4" rx="34.5" ry="23.1" fill="#4b4944" stroke="#111" stroke-width="1.0"/><ellipse cx="1125.5" cy="594.3" rx="34.5" ry="23.1" fill="#8a877f" stroke="#111" stroke-width="1.0"/><ellipse cx="1125.5" cy="592.2" rx="34.5" ry="23.1" fill="#55534d" stroke="#111" stroke-width="1.0"/><path d="M1090.9 590.2 A34.5 23.1 0 0 0 1160.0 590.2 A34.5 20.6 0 0 0 1090.9 590.2 Z" fill="url(#s2l)"/><path d="M1090.9 590.2 A34.5 23.1 0 0 0 1160.0 590.2 A34.5 20.6 0 0 0 1090.9 590.2 Z" fill="url(#s2d)" fill-opacity="0.85" stroke="#111" stroke-width="1.1"/><polygon points="1106.5,577.2 1111.5,572.6 1121.7,570.8 1128.9,570.8 1139.5,573.7 1144.3,577.5 1135.0,579.9 1142.9,593.5 1136.4,597.7 1123.1,587.6 1110.4,598.0 1104.7,593.5 1113.7,579.9" fill="#55534e" stroke="#111" stroke-width="1" stroke-linejoin="round"/><polygon points="1114.4,573.4 1121.0,571.6 1121.4,586.0 1117.0,582.5" fill="#8b8983"/><polygon points="1121.8,571.6 1128.8,571.6 1129.2,586.0 1122.3,586.0" fill="#77756f"/><polygon points="1129.7,571.6 1137.5,574.2 1134.4,582.9 1130.1,586.0" fill="#9a9892"/><polygon points="1107.0,579.0 1113.1,580.8 1115.7,587.3 1110.5,596.4 1105.7,592.9" fill="#7d7b75"/><polygon points="1135.3,582.1 1137.5,591.6 1137.1,596.4 1141.8,593.4" fill="#86847e"/><path d="M1121.4 571.6L1121.8 586.0M1129.2 571.6L1129.7 586.0M1113.7 579.9L1116.6 585.5M1135.0 579.9L1135.3 589.9" stroke="#111" stroke-width="0.8" fill="none"/></g>
<polygon points="942.2,621.6 1095.8,711.7 1105.5,505.6 941.6,422.2" fill="url(#rbF)" stroke="#080808" stroke-width="1.35" stroke-linejoin="round" />
<polygon points="1095.8,711.7 1118.2,696.9 1129.3,491.9 1105.5,505.6" fill="url(#rbR)" stroke="#080808" stroke-width="1.35" stroke-linejoin="round" />
<polygon points="941.6,422.2 1105.5,505.6 1129.3,491.9 965.5,410.0" fill="url(#rbT)" stroke="#080808" stroke-width="1.35" stroke-linejoin="round" />
<g><polygon points="1062.6,663.8 1067.3,660.2 1090.8,645.3 1086.1,649.0" fill="#575854" stroke="#575854" stroke-width="0.7"/><polygon points="1067.3,660.2 1071.6,655.9 1095.2,641.1 1090.8,645.3" fill="#595a56" stroke="#595a56" stroke-width="0.7"/><polygon points="1071.6,655.9 1075.6,651.1 1099.2,636.3 1095.2,641.1" fill="#5c5d59" stroke="#5c5d59" stroke-width="0.7"/><polygon points="1075.6,651.1 1079.1,645.8 1102.8,630.9 1099.2,636.3" fill="#5f605c" stroke="#5f605c" stroke-width="0.7"/><polygon points="1079.1,645.8 1082.2,639.9 1105.9,625.1 1102.8,630.9" fill="#626460" stroke="#626460" stroke-width="0.7"/><polygon points="1082.2,639.9 1084.8,633.5 1108.6,618.7 1105.9,625.1" fill="#666763" stroke="#666763" stroke-width="0.7"/><polygon points="1084.8,633.5 1086.9,626.6 1110.8,611.8 1108.6,618.7" fill="#696b67" stroke="#696b67" stroke-width="0.7"/><polygon points="1086.9,626.6 1088.6,619.3 1112.5,604.5 1110.8,611.8" fill="#6d6f6b" stroke="#6d6f6b" stroke-width="0.7"/><polygon points="1088.6,619.3 1089.7,611.6 1113.7,596.8 1112.5,604.5" fill="#727470" stroke="#727470" stroke-width="0.7"/><polygon points="1089.7,611.6 1090.4,603.4 1114.4,588.7 1113.7,596.8" fill="#767874" stroke="#767874" stroke-width="0.7"/><polygon points="1090.4,603.4 1090.5,595.0 1114.5,580.3 1114.4,588.7" fill="#7a7c78" stroke="#7a7c78" stroke-width="0.7"/><polygon points="1090.5,595.0 1090.0,586.3 1114.2,571.7 1114.5,580.3" fill="#7f817d" stroke="#7f817d" stroke-width="0.7"/><polygon points="1090.0,586.3 1089.1,577.3 1113.3,562.7 1114.2,571.7" fill="#838682" stroke="#838682" stroke-width="0.7"/><polygon points="1089.1,577.3 1087.6,568.1 1111.8,553.6 1113.3,562.7" fill="#888b87" stroke="#888b87" stroke-width="0.7"/><polygon points="1087.6,568.1 1085.5,558.8 1109.9,544.4 1111.8,553.6" fill="#878a86" stroke="#878a86" stroke-width="0.7"/><polygon points="1085.5,558.8 1083.0,549.4 1107.4,535.1 1109.9,544.4" fill="#858783" stroke="#858783" stroke-width="0.7"/><polygon points="1083.0,549.4 1080.0,539.9 1104.4,525.7 1107.4,535.1" fill="#828580" stroke="#828580" stroke-width="0.7"/><polygon points="1080.0,539.9 1076.4,530.5 1100.9,516.3 1104.4,525.7" fill="#80827d" stroke="#80827d" stroke-width="0.7"/><polygon points="1076.4,530.5 1072.4,521.1 1097.0,507.0 1100.9,516.3" fill="#7d7e79" stroke="#7d7e79" stroke-width="0.7"/><polygon points="1072.4,521.1 1068.0,511.9 1092.6,497.9 1097.0,507.0" fill="#7a7b75" stroke="#7a7b75" stroke-width="0.7"/><polygon points="1068.0,511.9 1063.1,502.8 1087.8,488.9 1092.6,497.9" fill="#767771" stroke="#767771" stroke-width="0.7"/><polygon points="1063.1,502.8 1057.8,494.0 1082.5,480.1 1087.8,488.9" fill="#73736d" stroke="#73736d" stroke-width="0.7"/><polygon points="1057.8,494.0 1052.2,485.4 1077.0,471.6 1082.5,480.1" fill="#71706a" stroke="#71706a" stroke-width="0.7"/><polygon points="1052.2,485.4 1046.2,477.1 1071.0,463.5 1077.0,471.6" fill="#6f6d67" stroke="#6f6d67" stroke-width="0.7"/><polygon points="1046.2,477.1 1040.0,469.2 1064.8,455.7 1071.0,463.5" fill="#6c6a64" stroke="#6c6a64" stroke-width="0.7"/><polygon points="1040.0,469.2 1033.4,461.8 1058.3,448.3 1064.8,455.7" fill="#6b6962" stroke="#6b6962" stroke-width="0.7"/><polygon points="1033.4,461.8 1026.7,454.7 1051.6,441.4 1058.3,448.3" fill="#6c6962" stroke="#6c6962" stroke-width="0.7"/><polygon points="1026.7,454.7 1019.7,448.2 1044.7,434.9 1051.6,441.4" fill="#6c6a62" stroke="#6c6a62" stroke-width="0.7"/><polygon points="1019.7,448.2 1012.6,442.2 1037.6,429.0 1044.7,434.9" fill="#6c6a63" stroke="#6c6a63" stroke-width="0.7"/><polygon points="1012.6,442.2 1005.5,436.8 1030.4,423.6 1037.6,429.0" fill="#6d6a63" stroke="#6d6a63" stroke-width="0.7"/><polygon points="1005.5,436.8 998.2,431.9 1023.2,418.9 1030.4,423.6" fill="#6d6b63" stroke="#6d6b63" stroke-width="0.7"/><polygon points="998.2,431.9 990.9,427.6 1015.9,414.7 1023.2,418.9" fill="#6e6b63" stroke="#6e6b63" stroke-width="0.7"/><polygon points="990.9,427.6 983.6,424.0 1008.6,411.1 1015.9,414.7" fill="#6e6b64" stroke="#6e6b64" stroke-width="0.7"/><polygon points="983.6,424.0 976.4,421.0 1001.4,408.1 1008.6,411.1" fill="#6e6c64" stroke="#6e6c64" stroke-width="0.7"/><polygon points="976.4,421.0 969.3,418.6 994.3,405.8 1001.4,408.1" fill="#6f6c64" stroke="#6f6c64" stroke-width="0.7"/><polygon points="969.3,418.6 962.3,416.9 987.3,404.2 994.3,405.8" fill="#6e6c64" stroke="#6e6c64" stroke-width="0.7"/><polygon points="962.3,416.9 955.5,415.8 980.4,403.2 987.3,404.2" fill="#6d6b63" stroke="#6d6b63" stroke-width="0.7"/><polygon points="955.5,415.8 948.8,415.4 973.8,402.8 980.4,403.2" fill="#6c6a62" stroke="#6c6a62" stroke-width="0.7"/><polygon points="948.8,415.4 942.4,415.7 967.4,403.1 973.8,402.8" fill="#6b6962" stroke="#6b6962" stroke-width="0.7"/><polygon points="942.4,415.7 936.3,416.6 961.2,404.1 967.4,403.1" fill="#6a6861" stroke="#6a6861" stroke-width="0.7"/><polygon points="936.3,416.6 930.4,418.1 955.3,405.6 961.2,404.1" fill="#696760" stroke="#696760" stroke-width="0.7"/><polygon points="930.4,418.1 924.9,420.3 949.7,407.8 955.3,405.6" fill="#686660" stroke="#686660" stroke-width="0.7"/></g>
<polyline points="893.3,460.3 894.9,455.4 896.7,450.7 898.7,446.3 901.0,442.2 903.6,438.2 906.3,434.6 909.4,431.2 912.6,428.2 916.0,425.4 919.7,423.0 923.6,420.9 948.4,408.4 952.5,406.6 956.7,405.2 961.2,404.1 965.8,403.3 970.5,402.9 975.4,402.9 980.4,403.2 985.6,403.9 990.8,404.9 996.1,406.4 1001.4,408.1 1006.8,410.3 1012.3,412.8 1017.7,415.6 1023.2,418.9 1028.6,422.4 1034.0,426.3 1039.4,430.4 1044.7,434.9 1049.9,439.7 1055.0,444.8 1060.0,450.1 1064.8,455.7 1069.5,461.5 1074.0,467.5 1078.4,473.7 1082.5,480.1 1086.5,486.7 1090.2,493.4 1093.7,500.2 1097.0,507.0 1100.0,514.0 1102.7,521.0 1105.2,528.0 1107.4,535.1 1109.3,542.1 1110.9,549.0 1112.2,555.9 1113.3,562.7 1114.0,569.5 1114.4,576.0 1114.6,582.5 1114.4,588.7 1113.9,594.8 1113.2,600.7 1112.1,606.4 1110.8,611.8 1109.2,617.0 1107.3,621.9 1105.2,626.6 1102.8,630.9 1100.1,635.0 1097.3,638.8 1094.2,642.2 1090.8,645.3 1087.3,648.1 1083.6,650.6 1060.1,665.4 1056.2,667.5 1052.2,669.3 1048.0,670.7 1043.6,671.8 1039.2,672.5 1034.6,672.9 1029.8,672.9 1025.0,672.6 1020.2,672.0 1015.2,671.0 1010.2,669.7 1005.2,668.0 1000.1,666.1 995.0,663.8 989.9,661.3 984.9,658.4 979.8,655.3 974.8,651.9 969.8,648.2 964.9,644.3 960.1,640.1 955.3,635.7 950.6,631.0 946.1,626.2 941.6,621.2 937.3,615.9 933.1,610.5 929.0,604.9 925.1,599.2 921.4,593.4 917.8,587.4 914.4,581.3 911.2,575.2 908.2,568.9 905.4,562.6 902.8,556.3 900.4,549.9 898.2,543.5 896.3,537.1 894.6,530.7 893.1,524.3 891.9,518.0 890.9,511.7 890.1,505.5 889.6,499.4 889.4,493.3 889.4,487.5 889.7,481.7 890.2,476.1 891.0,470.6 892.0,465.4 893.3,460.3" fill="none" stroke="#080808" stroke-width="1.1" stroke-linejoin="round" stroke-linecap="round" />
<polyline points="1019.6,663.9 1022.9,664.8 1026.1,665.5 1029.3,666.1 1032.5,666.5 1035.7,666.9 1038.8,667.0 1041.9,667.0 1045.0,666.9 1048.0,666.7 1050.9,666.2 1053.8,665.7 1056.7,665.0 1059.5,664.1 1062.2,663.1 1064.8,662.0 1067.4,660.7 1069.9,659.2 1072.3,657.6 1074.7,655.9 1076.9,654.0 1079.1,652.0 1081.2,649.9 1083.2,647.6 1085.1,645.2 1086.9,642.6 1088.5,639.9 1090.1,637.1 1091.6,634.2 1093.0,631.1 1094.2,628.0 1095.4,624.7 1096.4,621.3 1097.3,617.7 1098.1,614.1 1098.7,610.4 1099.3,606.6 1099.7,602.7 1100.0,598.7 1100.1,594.7 1100.2,590.5 1100.1,586.3 1099.9,582.0 1099.5,577.7 1099.0,573.3 1098.4,568.9 1097.7,564.4 1096.9,559.9 1095.9,555.3 1094.8,550.8 1093.5,546.2 1092.2,541.6 1090.7,537.0 1089.1,532.3 1087.4,527.7 1085.6,523.1 1083.7,518.6 1081.6,514.0 1079.5,509.5 1077.2,505.0 1074.9,500.6 1072.4,496.2 1069.9,491.9 1067.3,487.6 1064.5,483.4 1061.7,479.2 1058.8,475.2 1055.9,471.2 1052.9,467.3 1049.8,463.5 1046.6,459.9 1043.4,456.3 1040.1,452.8 1036.8,449.4 1033.4,446.2 1030.0,443.1 1026.5,440.1 1023.1,437.2 1019.6,434.5 1016.0,431.9 1012.5,429.4 1008.9,427.1 1005.4,424.9 1001.8,422.9 998.2,421.0 994.7,419.2 991.1,417.7 987.6,416.2 984.1,415.0 980.6,413.8 977.2,412.9 973.7,412.1 970.3,411.4 967.0,410.9 963.7,410.6 960.4,410.4 957.3,410.4 954.1,410.5 951.0,410.8 948.0,411.2 945.1,411.8 942.2,412.6 939.4,413.4 936.6,414.5 934.0,415.7 931.4,417.0 928.9,418.4 926.5,420.0 924.2,421.8 922.0,423.6 919.9,425.6 917.9,427.7 915.9,430.0 914.1,432.4 912.4,434.8 910.7,437.4 909.2,440.1 907.8,443.0 906.5,445.9 905.2,448.9 904.1,452.0" fill="none" stroke="#1c1c1c" stroke-width="0.9" stroke-linejoin="round" stroke-linecap="round" />
<polygon points="889.4,493.3 889.6,499.4 890.1,505.5 890.9,511.7 891.9,518.0 893.1,524.3 894.6,530.7 896.3,537.1 898.2,543.5 900.4,549.9 902.8,556.3 905.4,562.6 908.2,568.9 911.2,575.2 914.4,581.3 917.8,587.4 921.4,593.4 925.1,599.2 929.0,604.9 933.1,610.5 937.3,615.9 941.6,621.2 946.1,626.2 950.6,631.0 955.3,635.7 960.1,640.1 964.9,644.3 969.8,648.2 974.8,651.9 979.8,655.3 984.9,658.4 989.9,661.3 995.0,663.8 1000.1,666.1 1005.2,668.0 1010.2,669.7 1015.2,671.0 1020.2,672.0 1025.0,672.6 1029.8,672.9 1034.6,672.9 1039.2,672.5 1043.6,671.8 1048.0,670.7 1052.2,669.3 1056.2,667.5 1060.1,665.4 1063.8,663.0 1067.3,660.2 1070.6,657.1 1073.6,653.6 1076.5,649.9 1079.1,645.8 1081.4,641.4 1083.5,636.8 1085.4,631.8 1086.9,626.6 1088.2,621.2 1089.2,615.5 1089.9,609.6 1090.4,603.4 1090.5,597.1 1090.3,590.7 1089.8,584.0 1089.1,577.3 1088.0,570.4 1086.6,563.5 1084.9,556.5 1083.0,549.4 1080.8,542.3 1078.2,535.2 1075.5,528.2 1072.4,521.1 1069.1,514.2 1065.6,507.3 1061.8,500.6 1057.8,494.0 1053.6,487.5 1049.2,481.2 1044.7,475.1 1040.0,469.2 1035.1,463.6 1030.1,458.2 1025.0,453.1 1019.7,448.2 1014.4,443.7 1009.1,439.4 1003.6,435.5 998.2,431.9 992.7,428.6 987.3,425.7 981.8,423.2 976.4,421.0 971.1,419.1 965.8,417.7 960.6,416.6 955.5,415.8 950.5,415.5 945.6,415.5 940.9,415.9 936.3,416.6 931.9,417.7 927.6,419.1 923.6,420.9 919.7,423.0 916.0,425.4 912.6,428.2 909.4,431.2 906.3,434.6 903.6,438.2 901.0,442.2 898.7,446.3 896.7,450.7 894.9,455.4 893.3,460.3 892.0,465.4 891.0,470.6 890.2,476.1 889.7,481.7 889.4,487.5 889.4,493.3" fill="url(#gFi)" stroke="#080808" stroke-width="1.1" stroke-linejoin="round" />
<g><polygon points="998.2,678.8 1002.4,676.2 1045.3,649.6 1041.1,652.3" fill="#545551" stroke="#545551" stroke-width="0.7"/><polygon points="1002.4,676.2 1006.3,673.1 1049.2,646.5 1045.3,649.6" fill="#575854" stroke="#575854" stroke-width="0.7"/><polygon points="1006.3,673.1 1009.8,669.5 1052.9,642.9 1049.2,646.5" fill="#595a56" stroke="#595a56" stroke-width="0.7"/><polygon points="1009.8,669.5 1013.1,665.4 1056.2,638.7 1052.9,642.9" fill="#5c5d59" stroke="#5c5d59" stroke-width="0.7"/><polygon points="1013.1,665.4 1015.9,660.8 1059.1,634.2 1056.2,638.7" fill="#5f605c" stroke="#5f605c" stroke-width="0.7"/><polygon points="1015.9,660.8 1018.4,655.7 1061.7,629.1 1059.1,634.2" fill="#626460" stroke="#626460" stroke-width="0.7"/><polygon points="1018.4,655.7 1020.5,650.2 1063.8,623.7 1061.7,629.1" fill="#666763" stroke="#666763" stroke-width="0.7"/><polygon points="1020.5,650.2 1022.2,644.4 1065.6,617.8 1063.8,623.7" fill="#696b67" stroke="#696b67" stroke-width="0.7"/><polygon points="1022.2,644.4 1023.4,638.1 1066.9,611.6 1065.6,617.8" fill="#6d6f6b" stroke="#6d6f6b" stroke-width="0.7"/><polygon points="1023.4,638.1 1024.2,631.5 1067.9,605.0 1066.9,611.6" fill="#727470" stroke="#727470" stroke-width="0.7"/><polygon points="1024.2,631.5 1024.6,624.5 1068.3,598.1 1067.9,605.0" fill="#767874" stroke="#767874" stroke-width="0.7"/><polygon points="1024.6,624.5 1024.6,617.3 1068.4,590.9 1068.3,598.1" fill="#7a7c78" stroke="#7a7c78" stroke-width="0.7"/><polygon points="1024.6,617.3 1024.0,609.8 1068.0,583.5 1068.4,590.9" fill="#7f817d" stroke="#7f817d" stroke-width="0.7"/><polygon points="1024.0,609.8 1023.1,602.1 1067.1,575.9 1068.0,583.5" fill="#838682" stroke="#838682" stroke-width="0.7"/><polygon points="1023.1,602.1 1021.7,594.3 1065.8,568.2 1067.1,575.9" fill="#888b87" stroke="#888b87" stroke-width="0.7"/><polygon points="1021.7,594.3 1019.9,586.3 1064.1,560.3 1065.8,568.2" fill="#878a86" stroke="#878a86" stroke-width="0.7"/><polygon points="1019.9,586.3 1017.6,578.2 1061.9,552.4 1064.1,560.3" fill="#858783" stroke="#858783" stroke-width="0.7"/><polygon points="1017.6,578.2 1014.9,570.1 1059.3,544.4 1061.9,552.4" fill="#828580" stroke="#828580" stroke-width="0.7"/><polygon points="1014.9,570.1 1011.8,562.0 1056.3,536.4 1059.3,544.4" fill="#80827d" stroke="#80827d" stroke-width="0.7"/><polygon points="1011.8,562.0 1008.4,554.0 1052.9,528.5 1056.3,536.4" fill="#7d7e79" stroke="#7d7e79" stroke-width="0.7"/><polygon points="1008.4,554.0 1004.5,546.0 1049.1,520.7 1052.9,528.5" fill="#7a7b75" stroke="#7a7b75" stroke-width="0.7"/><polygon points="1004.5,546.0 1000.3,538.2 1045.0,513.0 1049.1,520.7" fill="#767771" stroke="#767771" stroke-width="0.7"/><polygon points="1000.3,538.2 995.8,530.6 1040.6,505.5 1045.0,513.0" fill="#73736d" stroke="#73736d" stroke-width="0.7"/><polygon points="995.8,530.6 991.0,523.2 1035.8,498.3 1040.6,505.5" fill="#71706a" stroke="#71706a" stroke-width="0.7"/><polygon points="991.0,523.2 985.9,516.1 1030.8,491.3 1035.8,498.3" fill="#6f6d67" stroke="#6f6d67" stroke-width="0.7"/><polygon points="985.9,516.1 980.5,509.3 1025.5,484.6 1030.8,491.3" fill="#6c6a64" stroke="#6c6a64" stroke-width="0.7"/><polygon points="980.5,509.3 975.0,502.8 1020.0,478.3 1025.5,484.6" fill="#6b6962" stroke="#6b6962" stroke-width="0.7"/><polygon points="975.0,502.8 969.2,496.7 1014.3,472.3 1020.0,478.3" fill="#6c6962" stroke="#6c6962" stroke-width="0.7"/><polygon points="969.2,496.7 963.3,491.0 1008.4,466.8 1014.3,472.3" fill="#6c6a62" stroke="#6c6a62" stroke-width="0.7"/><polygon points="963.3,491.0 957.3,485.8 1002.5,461.7 1008.4,466.8" fill="#6c6a63" stroke="#6c6a63" stroke-width="0.7"/><polygon points="957.3,485.8 951.2,481.0 996.4,457.0 1002.5,461.7" fill="#6d6a63" stroke="#6d6a63" stroke-width="0.7"/><polygon points="951.2,481.0 945.1,476.7 990.3,452.8 996.4,457.0" fill="#6d6b63" stroke="#6d6b63" stroke-width="0.7"/><polygon points="945.1,476.7 938.9,472.9 984.1,449.2 990.3,452.8" fill="#6e6b63" stroke="#6e6b63" stroke-width="0.7"/><polygon points="938.9,472.9 932.8,469.7 978.0,446.0 984.1,449.2" fill="#6e6b64" stroke="#6e6b64" stroke-width="0.7"/><polygon points="932.8,469.7 926.7,467.0 971.9,443.4 978.0,446.0" fill="#6e6c64" stroke="#6e6c64" stroke-width="0.7"/><polygon points="926.7,467.0 920.7,464.8 965.8,441.4 971.9,443.4" fill="#6f6c64" stroke="#6f6c64" stroke-width="0.7"/><polygon points="920.7,464.8 914.8,463.2 959.9,439.9 965.8,441.4" fill="#6e6c64" stroke="#6e6c64" stroke-width="0.7"/><polygon points="914.8,463.2 909.0,462.1 954.1,438.9 959.9,439.9" fill="#6d6b63" stroke="#6d6b63" stroke-width="0.7"/><polygon points="909.0,462.1 903.4,461.7 948.5,438.5 954.1,438.9" fill="#6c6a62" stroke="#6c6a62" stroke-width="0.7"/><polygon points="903.4,461.7 898.0,461.7 943.0,438.6 948.5,438.5" fill="#6b6962" stroke="#6b6962" stroke-width="0.7"/><polygon points="898.0,461.7 892.8,462.4 937.8,439.3 943.0,438.6" fill="#6a6861" stroke="#6a6861" stroke-width="0.7"/><polygon points="892.8,462.4 887.9,463.5 932.8,440.6 937.8,439.3" fill="#696760" stroke="#696760" stroke-width="0.7"/><polygon points="887.9,463.5 883.3,465.3 928.1,442.3 932.8,440.6" fill="#686660" stroke="#686660" stroke-width="0.7"/><polygon points="883.3,465.3 878.9,467.5 923.7,444.6 928.1,442.3" fill="#66655f" stroke="#66655f" stroke-width="0.7"/></g>
<polyline points="1021.6,657.6 1023.9,657.4 1026.2,657.1 1028.4,656.8 1030.6,656.3 1032.7,655.7 1034.8,655.0 1036.8,654.3 1038.8,653.4 1040.8,652.4 1042.7,651.3 1044.5,650.2 1046.3,648.9 1048.0,647.5 1049.7,646.1 1051.3,644.5 1052.9,642.9 1054.4,641.1 1055.8,639.3 1057.1,637.4 1058.4,635.3 1059.6,633.2 1060.7,631.1 1061.8,628.8 1062.8,626.4 1063.7,624.0 1064.5,621.5 1065.3,618.9 1066.0,616.3 1066.6,613.6 1067.1,610.8 1067.5,607.9 1067.9,605.0 1068.1,602.0 1068.3,599.0 1068.4,595.9 1068.4,592.8 1068.3,589.6 1068.2,586.3 1067.9,583.1 1067.6,579.8 1067.2,576.4 1066.7,573.1 1066.1,569.7 1065.4,566.2 1064.6,562.8 1063.8,559.3 1062.9,555.8 1061.9,552.4 1060.8,548.9 1059.6,545.4 1058.4,541.9 1057.1,538.4 1055.7,534.9 1054.2,531.4 1052.7,528.0 1051.1,524.6 1049.4,521.2 1047.6,517.8 1045.8,514.4 1043.9,511.1 1042.0,507.8 1040.0,504.6 1037.9,501.4 1035.8,498.3 1033.6,495.2 1031.4,492.1 1029.2,489.2 1026.8,486.2 1024.5,483.4 1022.1,480.6 1019.6,477.9 1017.2,475.2 1014.7,472.7 1012.1,470.2 1009.5,467.8 1007.0,465.4 1004.3,463.2 1001.7,461.0 999.1,459.0 996.4,457.0 993.7,455.1 991.0,453.3 988.3,451.6 985.7,450.0 983.0,448.5 980.3,447.2 977.6,445.9 974.9,444.7 972.2,443.6 969.6,442.6 967.0,441.7 964.3,440.9 961.8,440.3 959.2,439.7 956.6,439.2 954.1,438.9 951.6,438.7 949.2,438.5 946.8,438.5 944.4,438.5 942.0,438.7 939.8,439.0 937.5,439.4 935.3,439.9 933.1,440.5 931.0,441.2 929.0,441.9 927.0,442.8 925.0,443.8 923.1,444.9 921.3,446.1 919.5,447.3 917.8,448.7 916.2,450.1 914.6,451.7 913.1,453.3 911.6,455.0 910.2,456.8 908.9,458.7 907.7,460.6" fill="none" stroke="#080808" stroke-width="1.1" stroke-linejoin="round" stroke-linecap="round" />
<g><polygon points="989.2,710.0 993.8,706.4 1018.7,690.7 1014.1,694.3" fill="#575854" stroke="#575854" stroke-width="0.7"/><polygon points="993.8,706.4 997.9,702.2 1023.0,686.5 1018.7,690.7" fill="#595a56" stroke="#595a56" stroke-width="0.7"/><polygon points="997.9,702.2 1001.7,697.4 1026.8,681.7 1023.0,686.5" fill="#5c5d59" stroke="#5c5d59" stroke-width="0.7"/><polygon points="1001.7,697.4 1005.1,692.1 1030.2,676.4 1026.8,681.7" fill="#5f605c" stroke="#5f605c" stroke-width="0.7"/><polygon points="1005.1,692.1 1008.0,686.2 1033.2,670.5 1030.2,676.4" fill="#626460" stroke="#626460" stroke-width="0.7"/><polygon points="1008.0,686.2 1010.5,679.8 1035.7,664.0 1033.2,670.5" fill="#666763" stroke="#666763" stroke-width="0.7"/><polygon points="1010.5,679.8 1012.4,672.8 1037.8,657.1 1035.7,664.0" fill="#696b67" stroke="#696b67" stroke-width="0.7"/><polygon points="1012.4,672.8 1013.9,665.4 1039.3,649.7 1037.8,657.1" fill="#6d6f6b" stroke="#6d6f6b" stroke-width="0.7"/><polygon points="1013.9,665.4 1014.9,657.6 1040.3,641.9 1039.3,649.7" fill="#727470" stroke="#727470" stroke-width="0.7"/><polygon points="1014.9,657.6 1015.3,649.3 1040.8,633.7 1040.3,641.9" fill="#767874" stroke="#767874" stroke-width="0.7"/><polygon points="1015.3,649.3 1015.2,640.8 1040.8,625.2 1040.8,633.7" fill="#7a7c78" stroke="#7a7c78" stroke-width="0.7"/><polygon points="1015.2,640.8 1014.6,631.9 1040.2,616.4 1040.8,625.2" fill="#7f817d" stroke="#7f817d" stroke-width="0.7"/><polygon points="1014.6,631.9 1013.4,622.7 1039.1,607.3 1040.2,616.4" fill="#838682" stroke="#838682" stroke-width="0.7"/><polygon points="1013.4,622.7 1011.7,613.3 1037.5,598.0 1039.1,607.3" fill="#888b87" stroke="#888b87" stroke-width="0.7"/><polygon points="1011.7,613.3 1009.5,603.8 1035.4,588.5 1037.5,598.0" fill="#878a86" stroke="#878a86" stroke-width="0.7"/><polygon points="1009.5,603.8 1006.8,594.2 1032.7,578.9 1035.4,588.5" fill="#858783" stroke="#858783" stroke-width="0.7"/><polygon points="1006.8,594.2 1003.5,584.5 1029.5,569.3 1032.7,578.9" fill="#828580" stroke="#828580" stroke-width="0.7"/><polygon points="1003.5,584.5 999.8,574.8 1025.9,559.7 1029.5,569.3" fill="#80827d" stroke="#80827d" stroke-width="0.7"/><polygon points="999.8,574.8 995.7,565.2 1021.8,550.2 1025.9,559.7" fill="#7d7e79" stroke="#7d7e79" stroke-width="0.7"/><polygon points="995.7,565.2 991.0,555.6 1017.2,540.8 1021.8,550.2" fill="#7a7b75" stroke="#7a7b75" stroke-width="0.7"/><polygon points="991.0,555.6 986.0,546.3 1012.2,531.5 1017.2,540.8" fill="#767771" stroke="#767771" stroke-width="0.7"/><polygon points="986.0,546.3 980.6,537.2 1006.9,522.5 1012.2,531.5" fill="#73736d" stroke="#73736d" stroke-width="0.7"/><polygon points="980.6,537.2 974.8,528.3 1001.1,513.7 1006.9,522.5" fill="#71706a" stroke="#71706a" stroke-width="0.7"/><polygon points="974.8,528.3 968.7,519.7 995.1,505.2 1001.1,513.7" fill="#6f6d67" stroke="#6f6d67" stroke-width="0.7"/><polygon points="968.7,519.7 962.3,511.6 988.7,497.2 995.1,505.2" fill="#6c6a64" stroke="#6c6a64" stroke-width="0.7"/><polygon points="962.3,511.6 955.7,503.8 982.1,489.5 988.7,497.2" fill="#6b6962" stroke="#6b6962" stroke-width="0.7"/><polygon points="955.7,503.8 948.9,496.5 975.3,482.3 982.1,489.5" fill="#6c6962" stroke="#6c6962" stroke-width="0.7"/><polygon points="948.9,496.5 941.8,489.7 968.3,475.6 975.3,482.3" fill="#6c6a62" stroke="#6c6a62" stroke-width="0.7"/><polygon points="941.8,489.7 934.7,483.4 961.2,469.4 968.3,475.6" fill="#6c6a63" stroke="#6c6a63" stroke-width="0.7"/><polygon points="934.7,483.4 927.4,477.7 954.0,463.8 961.2,469.4" fill="#6d6a63" stroke="#6d6a63" stroke-width="0.7"/><polygon points="927.4,477.7 920.2,472.6 946.7,458.7 954.0,463.8" fill="#6d6b63" stroke="#6d6b63" stroke-width="0.7"/><polygon points="920.2,472.6 912.9,468.1 939.4,454.3 946.7,458.7" fill="#6e6b63" stroke="#6e6b63" stroke-width="0.7"/><polygon points="912.9,468.1 905.6,464.2 932.1,450.5 939.4,454.3" fill="#6e6b64" stroke="#6e6b64" stroke-width="0.7"/><polygon points="905.6,464.2 898.4,461.0 924.9,447.4 932.1,450.5" fill="#6e6c64" stroke="#6e6c64" stroke-width="0.7"/><polygon points="898.4,461.0 891.3,458.4 917.8,444.9 924.9,447.4" fill="#6f6c64" stroke="#6f6c64" stroke-width="0.7"/><polygon points="891.3,458.4 884.4,456.5 910.9,443.1 917.8,444.9" fill="#6e6c64" stroke="#6e6c64" stroke-width="0.7"/><polygon points="884.4,456.5 877.6,455.3 904.1,441.9 910.9,443.1" fill="#6d6b63" stroke="#6d6b63" stroke-width="0.7"/><polygon points="877.6,455.3 871.0,454.8 897.5,441.4 904.1,441.9" fill="#6c6a62" stroke="#6c6a62" stroke-width="0.7"/><polygon points="871.0,454.8 864.7,454.9 891.1,441.6 897.5,441.4" fill="#6b6962" stroke="#6b6962" stroke-width="0.7"/><polygon points="864.7,454.9 858.7,455.7 885.1,442.4 891.1,441.6" fill="#6a6861" stroke="#6a6861" stroke-width="0.7"/><polygon points="858.7,455.7 852.9,457.1 879.3,443.8 885.1,442.4" fill="#696760" stroke="#696760" stroke-width="0.7"/><polygon points="852.9,457.1 847.5,459.1 873.8,445.9 879.3,443.8" fill="#686660" stroke="#686660" stroke-width="0.7"/></g>
<polyline points="1040.8,627.4 1040.8,633.7 1040.5,639.9 1039.9,645.9 1039.0,651.6 1037.8,657.1 1036.3,662.3 1034.5,667.3 1032.5,672.0 1030.2,676.4 1027.7,680.4 1025.0,684.2 1022.0,687.6 1018.7,690.7 1015.3,693.4 1011.7,695.8 986.8,711.5 983.0,713.6 979.0,715.2 974.9,716.6 970.7,717.6 966.2,718.2 961.7,718.4 957.1,718.3 952.3,717.9 947.5,717.1 942.6,716.0 937.6,714.6 932.6,712.8 927.6,710.7 922.5,708.3 917.4,705.5 912.3,702.5 907.3,699.2 902.3,695.6 897.3,691.7 892.3,687.6 887.5,683.3 882.7,678.7 878.0,673.9 873.3,668.8 868.8,663.6 864.4,658.2 860.2,652.6 856.1,646.8 852.1,641.0 848.3,634.9 844.6,628.8 841.1,622.5 837.8,616.2 834.7,609.8 831.8,603.3 829.1,596.8 826.6,590.3 824.3,583.7 822.2,577.2 820.4,570.6 818.7,564.1 817.4,557.7 816.2,551.3 815.4,545.0 814.7,538.8 814.3,532.6 814.2,526.7 814.3,520.8 814.7,515.1 815.3,509.6 816.2,504.3 817.4,499.1 818.8,494.2 820.5,489.5 822.4,485.1 824.5,480.9 826.9,477.0 829.6,473.3 832.5,470.0 835.6,466.9 838.9,464.2 842.5,461.8 846.2,459.7 872.5,446.5 876.5,444.8 880.7,443.4 885.1,442.4 889.6,441.7 894.3,441.4 899.1,441.5 904.1,441.9 909.1,442.7 914.3,443.9 919.6,445.4 924.9,447.4 930.3,449.7 935.8,452.3 941.2,455.4 946.7,458.7 952.2,462.5 957.6,466.5 963.0,470.9 968.3,475.6 973.6,480.6 978.8,485.8 983.8,491.4 988.7,497.2 993.5,503.2 998.1,509.4 1002.6,515.9 1006.9,522.5 1010.9,529.2 1014.8,536.1 1018.4,543.1 1021.8,550.2 1024.9,557.3 1027.8,564.5 1030.4,571.7 1032.7,578.9 1034.7,586.1 1036.5,593.2 1038.0,600.3 1039.1,607.3 1040.0,614.1 1040.6,620.8 1040.8,627.4" fill="none" stroke="#080808" stroke-width="1.1" stroke-linejoin="round" stroke-linecap="round" />
<polyline points="920.3,675.6 924.0,678.6 927.7,681.4 931.5,684.0 935.3,686.5 939.1,688.8 942.9,691.0 946.7,693.0 950.5,694.8 954.3,696.4 958.1,697.9 961.9,699.2 965.6,700.3 969.3,701.2 973.0,701.9 976.6,702.5 980.2,702.8 983.8,703.0 987.2,702.9 990.6,702.7 994.0,702.3 997.3,701.6 1000.5,700.8 1003.6,699.8 1006.6,698.5 1009.5,697.1 1012.3,695.5 1015.0,693.7 1017.6,691.6 1020.1,689.4 1022.5,687.0 1024.7,684.5 1026.8,681.7 1028.8,678.8 1030.6,675.6 1032.3,672.4 1033.9,668.9 1035.3,665.3 1036.6,661.5 1037.7,657.6 1038.6,653.5 1039.4,649.3 1040.0,644.9 1040.5,640.4 1040.7,635.8 1040.9,631.1 1040.8,626.3 1040.6,621.4 1040.2,616.4 1039.7,611.3 1039.0,606.1 1038.1,600.9 1037.0,595.6 1035.8,590.3 1034.4,584.9 1032.9,579.5 1031.2,574.1 1029.3,568.7 1027.3,563.3 1025.1,557.9 1022.8,552.6 1020.4,547.2 1017.8,541.9 1015.1,536.7 1012.2,531.5 1009.3,526.4 1006.2,521.3 1003.0,516.4 999.6,511.6 996.2,506.8 992.7,502.2 989.1,497.7 985.5,493.3 981.7,489.0 977.9,485.0 974.0,481.0 970.1,477.2 966.1,473.6 962.1,470.2 958.1,466.9 954.0,463.8 949.9,460.9 945.8,458.2 941.7,455.6 937.6,453.3 933.5,451.2 929.4,449.3 925.4,447.6 921.4,446.0 917.4,444.8 913.5,443.7 909.6,442.8 905.7,442.1 902.0,441.7 898.3,441.4 894.7,441.4 891.1,441.6 887.7,441.9 884.3,442.5 881.1,443.3 877.9,444.3 874.8,445.5 871.9,446.9 869.0,448.4 866.3,450.2 863.7,452.1 861.2,454.3 858.8,456.6 856.6,459.0 854.5,461.6 852.5,464.4 850.7,467.4 849.0,470.5 847.5,473.7 846.0,477.1 844.8,480.6 843.6,484.3 842.6,488.0 841.8,491.9 841.1,495.9 840.5,500.0" fill="none" stroke="#080808" stroke-width="1.1" stroke-linejoin="round" stroke-linecap="round" />
<polygon points="814.3,532.6 814.7,538.8 815.4,545.0 816.2,551.3 817.4,557.7 818.7,564.1 820.4,570.6 822.2,577.2 824.3,583.7 826.6,590.3 829.1,596.8 831.8,603.3 834.7,609.8 837.8,616.2 841.1,622.5 844.6,628.8 848.3,634.9 852.1,641.0 856.1,646.8 860.2,652.6 864.4,658.2 868.8,663.6 873.3,668.8 878.0,673.9 882.7,678.7 887.5,683.3 892.3,687.6 897.3,691.7 902.3,695.6 907.3,699.2 912.3,702.5 917.4,705.5 922.5,708.3 927.6,710.7 932.6,712.8 937.6,714.6 942.6,716.0 947.5,717.1 952.3,717.9 957.1,718.3 961.7,718.4 966.2,718.2 970.7,717.6 974.9,716.6 979.0,715.2 983.0,713.6 986.8,711.5 990.4,709.1 993.8,706.4 996.9,703.3 999.9,699.9 1002.6,696.2 1005.1,692.1 1007.3,687.7 1009.3,683.0 1011.0,678.1 1012.4,672.8 1013.6,667.3 1014.4,661.6 1015.0,655.6 1015.3,649.3 1015.3,642.9 1014.9,636.4 1014.3,629.6 1013.4,622.7 1012.2,615.7 1010.7,608.6 1008.9,601.4 1006.8,594.2 1004.4,586.9 1001.7,579.6 998.8,572.4 995.7,565.2 992.2,558.0 988.6,550.9 984.7,544.0 980.6,537.2 976.3,530.5 971.8,524.0 967.1,517.7 962.3,511.6 957.4,505.7 952.3,500.1 947.1,494.8 941.8,489.7 936.5,484.9 931.1,480.5 925.6,476.4 920.2,472.6 914.7,469.2 909.2,466.1 903.8,463.3 898.4,461.0 893.1,459.0 887.8,457.4 882.6,456.2 877.6,455.3 872.6,454.8 867.8,454.7 863.2,455.0 858.7,455.7 854.3,456.7 850.2,458.0 846.2,459.7 842.5,461.8 838.9,464.2 835.6,466.9 832.5,470.0 829.6,473.3 826.9,477.0 824.5,480.9 822.4,485.1 820.5,489.5 818.8,494.2 817.4,499.1 816.2,504.3 815.3,509.6 814.7,515.1 814.3,520.8 814.2,526.7 814.3,532.6" fill="url(#gCap)" stroke="#080808" stroke-width="1.1" stroke-linejoin="round" />
<polygon points="814.3,532.6 814.7,538.8 815.4,545.0 816.2,551.3 817.4,557.7 818.7,564.1 820.4,570.6 822.2,577.2 824.3,583.7 826.6,590.3 829.1,596.8 831.8,603.3 834.7,609.8 837.8,616.2 841.1,622.5 844.6,628.8 848.3,634.9 852.1,641.0 856.1,646.8 860.2,652.6 864.4,658.2 868.8,663.6 873.3,668.8 878.0,673.9 882.7,678.7 887.5,683.3 892.3,687.6 897.3,691.7 902.3,695.6 907.3,699.2 912.3,702.5 917.4,705.5 922.5,708.3 927.6,710.7 932.6,712.8 937.6,714.6 942.6,716.0 947.5,717.1 952.3,717.9 957.1,718.3 961.7,718.4 966.2,718.2 970.7,717.6 974.9,716.6 979.0,715.2 983.0,713.6 986.8,711.5 990.4,709.1 993.8,706.4 996.9,703.3 999.9,699.9 1002.6,696.2 1005.1,692.1 1007.3,687.7 1009.3,683.0 1011.0,678.1 1012.4,672.8 1013.6,667.3 1014.4,661.6 1015.0,655.6 1015.3,649.3 1015.3,642.9 1014.9,636.4 1014.3,629.6 1013.4,622.7 1012.2,615.7 1010.7,608.6 1008.9,601.4 1006.8,594.2 1004.4,586.9 1001.7,579.6 998.8,572.4 995.7,565.2 992.2,558.0 988.6,550.9 984.7,544.0 980.6,537.2 976.3,530.5 971.8,524.0 967.1,517.7 962.3,511.6 957.4,505.7 952.3,500.1 947.1,494.8 941.8,489.7 936.5,484.9 931.1,480.5 925.6,476.4 920.2,472.6 914.7,469.2 909.2,466.1 903.8,463.3 898.4,461.0 893.1,459.0 887.8,457.4 882.6,456.2 877.6,455.3 872.6,454.8 867.8,454.7 863.2,455.0 858.7,455.7 854.3,456.7 850.2,458.0 846.2,459.7 842.5,461.8 838.9,464.2 835.6,466.9 832.5,470.0 829.6,473.3 826.9,477.0 824.5,480.9 822.4,485.1 820.5,489.5 818.8,494.2 817.4,499.1 816.2,504.3 815.3,509.6 814.7,515.1 814.3,520.8 814.2,526.7 814.3,532.6" fill="url(#gCapV)" stroke="none" stroke-width="1.35" stroke-linejoin="round" />
<circle cx="1010.9" cy="529.2" r="4.3" fill="#4a3f5c" fill-opacity="0.9"/><circle cx="1010.9" cy="529.2" r="1.8" fill="#2c2a30"/>
<polygon points="803.3,702.7 956.9,803.0 957.2,590.9 793.3,497.3" fill="url(#fbF)" stroke="#080808" stroke-width="1.35" stroke-linejoin="round" />
<polygon points="956.9,803.0 981.9,786.5 984.0,575.4 957.2,590.9" fill="url(#fbR)" stroke="#080808" stroke-width="1.35" stroke-linejoin="round" />
<polygon points="793.3,497.3 957.2,590.9 984.0,575.4 820.1,483.7" fill="url(#fbT)" stroke="#080808" stroke-width="1.35" stroke-linejoin="round" />
<polygon points="886.3,616.6 886.1,614.2 885.6,611.7 884.8,609.1 883.7,606.5 882.3,604.0 880.8,601.6 879.1,599.5 877.2,597.6 875.3,596.0 873.4,594.7 871.5,593.9 869.6,593.4 867.9,593.4 866.3,593.7 865.0,594.5 863.9,595.7 863.0,597.2 862.5,599.0 862.3,601.1 862.3,603.4 862.7,605.8 863.4,608.3 864.3,610.9 865.5,613.4 866.9,615.8 868.5,618.1 870.3,620.1 872.2,621.8 874.1,623.3 876.0,624.3 877.9,625.0 879.7,625.3 881.3,625.2 882.8,624.6 884.1,623.7 885.1,622.4 885.8,620.7 886.2,618.8 886.3,616.6" fill="url(#gHole)" stroke="#080808" stroke-width="1.1" stroke-linejoin="round" />
<polygon points="819.9,799.6 819.0,779.7 864.4,680.5 885.4,668.1 887.4,757.6" fill="url(#gGs)" stroke="#080808" stroke-width="1.35" stroke-linejoin="round" />
<polygon points="800.8,786.4 819.9,799.6 819.0,779.7 799.8,766.6" fill="#52524e" stroke="#080808" stroke-width="1.35" stroke-linejoin="round" />
<polygon points="799.8,766.6 819.0,779.7 864.4,680.5 844.7,668.1" fill="url(#gGl)" stroke="#080808" stroke-width="1.35" stroke-linejoin="round" />
<polygon points="844.7,668.1 864.4,680.5 885.4,668.1 865.7,655.9" fill="#64625b" stroke="#080808" stroke-width="1.35" stroke-linejoin="round" />
<g><ellipse cx="772.9" cy="813.7" rx="39.7" ry="26.5" fill="#4b4944" stroke="#111" stroke-width="1.0"/><ellipse cx="772.9" cy="811.3" rx="39.7" ry="26.5" fill="#8a877f" stroke="#111" stroke-width="1.0"/><ellipse cx="772.9" cy="808.9" rx="39.7" ry="26.5" fill="#55534d" stroke="#111" stroke-width="1.0"/><path d="M733.2 806.5 A39.7 26.5 0 0 0 812.6 806.5 A39.7 23.7 0 0 0 733.2 806.5 Z" fill="url(#s1l)"/><path d="M733.2 806.5 A39.7 26.5 0 0 0 812.6 806.5 A39.7 23.7 0 0 0 733.2 806.5 Z" fill="url(#s1d)" fill-opacity="0.85" stroke="#111" stroke-width="1.1"/><polygon points="751.1,791.6 756.8,786.3 768.6,784.2 776.8,784.2 789.0,787.6 794.5,791.9 783.8,794.7 792.9,810.4 785.5,815.2 770.2,803.6 755.6,815.5 749.0,810.4 759.4,794.7" fill="#55534e" stroke="#111" stroke-width="1" stroke-linejoin="round"/><polygon points="760.2,787.2 767.7,785.2 768.2,801.7 763.2,797.7" fill="#8b8983"/><polygon points="768.7,785.2 776.7,785.2 777.2,801.7 769.2,801.7" fill="#77756f"/><polygon points="777.7,785.2 786.7,788.2 783.2,798.2 778.2,801.7" fill="#9a9892"/><polygon points="751.7,793.7 758.7,795.7 761.7,803.2 755.7,813.7 750.2,809.7" fill="#7d7b75"/><polygon points="784.2,797.2 786.7,808.2 786.2,813.7 791.7,810.2" fill="#86847e"/><path d="M768.2 785.2L768.7 801.7M777.2 785.2L777.7 801.7M759.4 794.7L762.7 801.2M783.8 794.7L784.2 806.2" stroke="#111" stroke-width="0.8" fill="none"/></g>
</svg>
<svg class="abs" style="left:1780px;top:11px" width="120" height="120" viewBox="1780 190 120 120" font-family="Liberation Sans, sans-serif">
<defs><filter id="vcb" x="-30%" y="-30%" width="160%" height="160%"><feGaussianBlur stdDeviation="4"/></filter></defs>
<path d="M1812 262L1843 284L1876 262L1846 246Z" fill="#000" fill-opacity=".22" filter="url(#vcb)" transform="translate(4 6)"/>
<path d="M1809.200 222.300L1843.500 206.600L1878.700 221.600L1843.800 241.500Z" fill="#ececec" fill-opacity=".8" stroke="#7a7a7a" stroke-width=".7"/>
<path d="M1809.200 222.300L1843.800 241.500L1843.200 282.500L1812.500 261Z" fill="#e6e6e6" fill-opacity=".8" stroke="#7a7a7a" stroke-width=".7"/>
<path d="M1843.800 241.500L1878.700 221.600L1874.900 261.400L1843.200 282.500Z" fill="#dddddd" fill-opacity=".8" stroke="#7a7a7a" stroke-width=".7"/>
<path d="M1807 215.200L1812.100 261" stroke="#4343e6" stroke-width="2.800"/>
<path d="M1812 262L1849.300 288.900" stroke="#f29a9a" stroke-width="2.800"/>
<text transform="matrix(.874 .485 -.909 .416 1841.500 216.500)" font-size="8.600" fill="#8d96a6" text-anchor="middle" x="8" y="8">TOP</text>
<text transform="matrix(.874 .485 0 1 1814.500 249)" font-size="8.600" fill="#8d96a6" x="0" y="0">FRONT</text>
<text transform="matrix(.869 -.495 0 1 1849.500 263)" font-size="8.600" fill="#8d96a6" x="0" y="0">RIGHT</text>
<text x="1800.500" y="212" font-size="12" fill="#6a6af2">Z</text>
<text x="1850" y="298" font-size="12" fill="#f29a9a">X</text>
</svg>
</div>
<div class="panelhdr" style="top:185px;height:38px"></div>
<div class="abs cond" style="left:35px;top:195px;font-size:18.6px;line-height:22px;letter-spacing:0.1px;color:#fff">BROWSER</div>
<svg class="abs" style="left:0;top:185px" width="443" height="38" viewBox="0 0 443 38"><path d="M8.600 14.300v9l-5.900-4.500zM14.400 14.300v9l-5.900-4.500z" fill="#8593ab"/><rect x="410.500" y="17" width="13" height="2.400" fill="#8f9bb0"/></svg>
<svg class="abs" style="left:16px;top:238px" width="20" height="16" viewBox="0 0 20 16"><path d="M4.500 4.700L9.900 10.100L15.300 4.700" fill="none" stroke="#2b2b2b" stroke-width="4.600" stroke-linejoin="round" stroke-linecap="round"/><path d="M4.500 4.700L9.900 10.100L15.300 4.700" fill="none" stroke="#f4f4f4" stroke-width="1.600" stroke-linejoin="round" stroke-linecap="round"/></svg>
<div class="row" style="left:47px;top:230px;width:348px"><div class="c" style="left:38px;width:272px;background:#222933"></div><div class="c" style="left:37px;width:1px;background:#566072"></div><div class="c" style="left:310px;width:1px;background:#566072"></div><div class="t" style="left:86.700px;font-weight:bold">Payload pulley assembly</div></div>
<svg class="abs" style="left:51px;top:236px" width="25" height="18" viewBox="0 0 25 18"><path d="M0.500 9Q12.500 -6.800 24.500 9Q12.500 24.800 0.500 9Z" fill="#d6d6d6"/><circle cx="12.500" cy="9" r="4.700" fill="#3c4454"/><circle cx="12.500" cy="9" r="3.200" fill="#bdbdbd"/></svg>
<svg class="abs" style="left:88px;top:231px" width="25" height="29" viewBox="0 0 25 29"><path d="M1 5.500h8.500v8.500h-8.500z" fill="#8ccbf9"/><path d="M1 5.500l3-3.500h8.700l-3.200 3.500z" fill="#b6e0fd"/><path d="M9.500 5.500l3.200-3.500v8.500l-3.200 3.500z" fill="#6aaee4"/><path d="M1 15.400h8.700v9.100h-8.700z" fill="#dcdcdc"/><path d="M11.500 16h8.900v8.500h-8.900z" fill="#dcdcdc"/><path d="M11.500 16l3-3.800h9.300l-3.400 3.800z" fill="#f3f3f3"/><path d="M20.400 16l3.400-3.800v8.300l-3.400 4z" fill="#bdbdbd"/></svg>
<svg class="abs" style="left:363px;top:235px" width="22" height="22" viewBox="0 0 22 22"><circle cx="11" cy="11" r="9.200" fill="#fff"/><circle cx="11" cy="11" r="4.300" fill="#2a303c"/></svg>
<svg class="abs" style="left:46px;top:271px" width="16" height="20" viewBox="0 0 16 20"><path d="M4.300 4.300L10.300 9.900L4.300 15.500" fill="none" stroke="#2b2b2b" stroke-width="4.600" stroke-linejoin="round" stroke-linecap="round"/><path d="M4.300 4.300L10.300 9.900L4.300 15.500" fill="none" stroke="#f4f4f4" stroke-width="1.600" stroke-linejoin="round" stroke-linecap="round"/></svg>
<div class="row" style="left:74px;top:266px;width:225px"><div class="c" style="left:37px;width:1px;background:#566072"></div><div class="t" style="left:49.3px">Document Settings</div></div>
<svg class="abs" style="left:79px;top:268px" width="24" height="26" viewBox="0 0 24 26"><path d="M9.6 0.5L14.4 0.5L14.9 4.1L17.8 5.8L21.1 4.4L23.6 8.6L20.7 10.8L20.7 14.2L23.6 16.4L21.1 20.6L17.8 19.2L14.9 20.9L14.4 24.5L9.6 24.5L9.1 20.9L6.2 19.2L2.9 20.6L0.4 16.4L3.3 14.2L3.3 10.8L0.4 8.6L2.9 4.4L6.2 5.8L9.1 4.1Z" fill="#a3a8b4"/><circle cx="12" cy="12.5" r="4.200" fill="#3c4454"/></svg>
<svg class="abs" style="left:46px;top:307px" width="16" height="20" viewBox="0 0 16 20"><path d="M4.300 4.300L10.300 9.900L4.300 15.500" fill="none" stroke="#2b2b2b" stroke-width="4.600" stroke-linejoin="round" stroke-linecap="round"/><path d="M4.300 4.300L10.300 9.900L4.300 15.500" fill="none" stroke="#f4f4f4" stroke-width="1.600" stroke-linejoin="round" stroke-linecap="round"/></svg>
<div class="row" style="left:74px;top:302px;width:177px"><div class="c" style="left:37px;width:1px;background:#566072"></div><div class="t" style="left:49.3px">Named Views</div></div>
<svg class="abs" style="left:79px;top:306px" width="24" height="22" viewBox="0 0 24 22"><path d="M0 2h7.500l3 3.600h-10.500z" fill="#b9b9b9"/><path d="M0 6.200h24v15.800h-24z" fill="#d6d6d6"/></svg>
<svg class="abs" style="left:46px;top:343px" width="16" height="20" viewBox="0 0 16 20"><path d="M4.300 4.300L10.300 9.900L4.300 15.500" fill="none" stroke="#2b2b2b" stroke-width="4.600" stroke-linejoin="round" stroke-linecap="round"/><path d="M4.300 4.300L10.300 9.900L4.300 15.500" fill="none" stroke="#f4f4f4" stroke-width="1.600" stroke-linejoin="round" stroke-linecap="round"/></svg>
<div class="row" style="left:74px;top:338px;width:154px"><div class="c" style="left:37px;width:1px;background:#566072"></div><div class="t" style="left:87.3px">Origin</div></div>
<svg class="abs" style="left:78px;top:344px" width="25" height="18" viewBox="0 0 25 18"><g fill="none" stroke="#d6d6d6" stroke-width="1.500"><path d="M1.200 9Q12.500 -5.500 23.800 9Q12.500 23.500 1.200 9Z"/><circle cx="12.500" cy="9" r="4.300"/><path d="M4.500 1.500L20 16.500" stroke-width="1.600"/></g></svg>
<svg class="abs" style="left:116px;top:342px" width="24" height="22" viewBox="0 0 24 22"><path d="M0 2h7.500l3 3.600h-10.500z" fill="#b9b9b9"/><path d="M0 6.200h24v15.800h-24z" fill="#d6d6d6"/></svg>
<svg class="abs" style="left:46px;top:379px" width="16" height="20" viewBox="0 0 16 20"><path d="M4.300 4.300L10.300 9.900L4.300 15.500" fill="none" stroke="#2b2b2b" stroke-width="4.600" stroke-linejoin="round" stroke-linecap="round"/><path d="M4.300 4.300L10.300 9.900L4.300 15.500" fill="none" stroke="#f4f4f4" stroke-width="1.600" stroke-linejoin="round" stroke-linecap="round"/></svg>
<div class="row" style="left:74px;top:374px;width:215px"><div class="c" style="left:37px;width:1px;background:#566072"></div><div class="t" style="left:87.3px">Relationships</div></div>
<svg class="abs" style="left:78px;top:380px" width="25" height="18" viewBox="0 0 25 18"><path d="M0.500 9Q12.500 -6.800 24.500 9Q12.500 24.800 0.500 9Z" fill="#d6d6d6"/><circle cx="12.500" cy="9" r="4.700" fill="#3c4454"/><circle cx="12.500" cy="9" r="3.200" fill="#bdbdbd"/></svg>
<svg class="abs" style="left:116px;top:378px" width="24" height="22" viewBox="0 0 24 22"><path d="M0 2h7.500l3 3.600h-10.500z" fill="#b9b9b9"/><path d="M0 6.200h24v15.800h-24z" fill="#d6d6d6"/></svg>
<svg class="abs" style="left:46px;top:415px" width="16" height="20" viewBox="0 0 16 20"><path d="M4.300 4.300L10.300 9.900L4.300 15.500" fill="none" stroke="#2b2b2b" stroke-width="4.600" stroke-linejoin="round" stroke-linecap="round"/><path d="M4.300 4.300L10.300 9.900L4.300 15.500" fill="none" stroke="#f4f4f4" stroke-width="1.600" stroke-linejoin="round" stroke-linecap="round"/></svg>
<div class="row" style="left:74px;top:410px;width:160px"><div class="c" style="left:37px;width:1px;background:#566072"></div><div class="t" style="left:87.3px">Bodies</div></div>
<svg class="abs" style="left:78px;top:416px" width="25" height="18" viewBox="0 0 25 18"><path d="M0.500 9Q12.500 -6.800 24.500 9Q12.500 24.800 0.500 9Z" fill="#d6d6d6"/><circle cx="12.500" cy="9" r="4.700" fill="#3c4454"/><circle cx="12.500" cy="9" r="3.200" fill="#bdbdbd"/></svg>
<svg class="abs" style="left:116px;top:414px" width="24" height="22" viewBox="0 0 24 22"><path d="M0 2h7.500l3 3.600h-10.500z" fill="#b9b9b9"/><path d="M0 6.200h24v15.800h-24z" fill="#d6d6d6"/></svg>
<svg class="abs" style="left:46px;top:451px" width="16" height="20" viewBox="0 0 16 20"><path d="M4.300 4.300L10.300 9.900L4.300 15.500" fill="none" stroke="#2b2b2b" stroke-width="4.600" stroke-linejoin="round" stroke-linecap="round"/><path d="M4.300 4.300L10.300 9.900L4.300 15.500" fill="none" stroke="#f4f4f4" stroke-width="1.600" stroke-linejoin="round" stroke-linecap="round"/></svg>
<div class="row" style="left:74px;top:446px;width:178px"><div class="c" style="left:37px;width:1px;background:#566072"></div><div class="t" style="left:87.3px">Sketches</div></div>
<svg class="abs" style="left:78px;top:452px" width="25" height="18" viewBox="0 0 25 18"><path d="M0.500 9Q12.500 -6.800 24.500 9Q12.500 24.800 0.500 9Z" fill="#d6d6d6"/><circle cx="12.500" cy="9" r="4.700" fill="#3c4454"/><circle cx="12.500" cy="9" r="3.200" fill="#bdbdbd"/></svg>
<svg class="abs" style="left:116px;top:450px" width="24" height="22" viewBox="0 0 24 22"><path d="M0 2h7.500l3 3.600h-10.500z" fill="#b9b9b9"/><path d="M0 6.200h24v15.800h-24z" fill="#d6d6d6"/></svg>
<svg class="abs" style="left:46px;top:487px" width="16" height="20" viewBox="0 0 16 20"><path d="M4.300 4.300L10.300 9.900L4.300 15.500" fill="none" stroke="#2b2b2b" stroke-width="4.600" stroke-linejoin="round" stroke-linecap="round"/><path d="M4.300 4.300L10.300 9.900L4.300 15.500" fill="none" stroke="#f4f4f4" stroke-width="1.600" stroke-linejoin="round" stroke-linecap="round"/></svg>
<div class="row" style="left:74px;top:482px;width:208px"><div class="c" style="left:37px;width:1px;background:#566072"></div><div class="t" style="left:87.3px">Construction</div></div>
<svg class="abs" style="left:78px;top:488px" width="25" height="18" viewBox="0 0 25 18"><path d="M0.500 9Q12.500 -6.800 24.500 9Q12.500 24.800 0.500 9Z" fill="#d6d6d6"/><circle cx="12.500" cy="9" r="4.700" fill="#3c4454"/><circle cx="12.500" cy="9" r="3.200" fill="#bdbdbd"/></svg>
<svg class="abs" style="left:116px;top:486px" width="24" height="22" viewBox="0 0 24 22"><path d="M0 2h7.500l3 3.600h-10.500z" fill="#b9b9b9"/><path d="M0 6.200h24v15.800h-24z" fill="#d6d6d6"/></svg>
<svg class="abs" style="left:46px;top:523px" width="16" height="20" viewBox="0 0 16 20"><path d="M4.300 4.300L10.300 9.900L4.300 15.500" fill="none" stroke="#2b2b2b" stroke-width="4.600" stroke-linejoin="round" stroke-linecap="round"/><path d="M4.300 4.300L10.300 9.900L4.300 15.500" fill="none" stroke="#f4f4f4" stroke-width="1.600" stroke-linejoin="round" stroke-linecap="round"/></svg>
<div class="row" style="left:74px;top:518px;width:300px"><div class="c" style="left:37px;width:1px;background:#566072"></div><div class="c" style="left:112px;width:1px;background:#566072"></div><div class="t" style="left:124.3px">Pulley roof screw:1</div></div>
<svg class="abs" style="left:78px;top:524px" width="25" height="18" viewBox="0 0 25 18"><path d="M0.500 9Q12.500 -6.800 24.500 9Q12.500 24.800 0.500 9Z" fill="#d6d6d6"/><circle cx="12.500" cy="9" r="4.700" fill="#3c4454"/><circle cx="12.500" cy="9" r="3.200" fill="#bdbdbd"/></svg>
<svg class="abs" style="left:117px;top:522px" width="22" height="22" viewBox="0 0 22 22"><path d="M0 5.500h15v16h-15z" fill="#8ccbf9"/><path d="M0 5.500l6.500-5.500h15l-6.500 5.500z" fill="#b6e0fd"/><path d="M15 5.500l6.500-5.500v15.500l-6.500 6z" fill="#6aaee4"/></svg>
<svg class="abs" style="left:153px;top:521px" width="24" height="24" viewBox="0 0 24 24"><g transform="translate(12 12) rotate(-38)" fill="none" stroke="#d6d6d6" stroke-width="2.200"><rect x="-12.500" y="-4" width="14" height="8" rx="4"/><rect x="-1.500" y="-4" width="14" height="8" rx="4"/></g></svg>
<svg class="abs" style="left:46px;top:559px" width="16" height="20" viewBox="0 0 16 20"><path d="M4.300 4.300L10.300 9.900L4.300 15.500" fill="none" stroke="#2b2b2b" stroke-width="4.600" stroke-linejoin="round" stroke-linecap="round"/><path d="M4.300 4.300L10.300 9.900L4.300 15.500" fill="none" stroke="#f4f4f4" stroke-width="1.600" stroke-linejoin="round" stroke-linecap="round"/></svg>
<div class="row" style="left:74px;top:554px;width:258px"><div class="c" style="left:37px;width:1px;background:#566072"></div><div class="c" style="left:112px;width:1px;background:#566072"></div><div class="t" style="left:124.3px">pulley wheel:1</div></div>
<svg class="abs" style="left:78px;top:560px" width="25" height="18" viewBox="0 0 25 18"><path d="M0.500 9Q12.500 -6.800 24.500 9Q12.500 24.800 0.500 9Z" fill="#d6d6d6"/><circle cx="12.500" cy="9" r="4.700" fill="#3c4454"/><circle cx="12.500" cy="9" r="3.200" fill="#bdbdbd"/></svg>
<svg class="abs" style="left:117px;top:558px" width="22" height="22" viewBox="0 0 22 22"><path d="M0 5.500h15v16h-15z" fill="#8ccbf9"/><path d="M0 5.500l6.500-5.500h15l-6.500 5.500z" fill="#b6e0fd"/><path d="M15 5.500l6.500-5.500v15.500l-6.500 6z" fill="#6aaee4"/></svg>
<svg class="abs" style="left:153px;top:557px" width="24" height="24" viewBox="0 0 24 24"><g transform="translate(12 12) rotate(-38)" fill="none" stroke="#d6d6d6" stroke-width="2.200"><rect x="-12.500" y="-4" width="14" height="8" rx="4"/><rect x="-1.500" y="-4" width="14" height="8" rx="4"/></g></svg>
<svg class="abs" style="left:46px;top:595px" width="16" height="20" viewBox="0 0 16 20"><path d="M4.300 4.300L10.300 9.900L4.300 15.500" fill="none" stroke="#2b2b2b" stroke-width="4.600" stroke-linejoin="round" stroke-linecap="round"/><path d="M4.300 4.300L10.300 9.900L4.300 15.500" fill="none" stroke="#f4f4f4" stroke-width="1.600" stroke-linejoin="round" stroke-linecap="round"/></svg>
<div class="row" style="left:74px;top:590px;width:300px"><div class="c" style="left:37px;width:1px;background:#566072"></div><div class="c" style="left:112px;width:1px;background:#566072"></div><div class="t" style="left:124.3px">Pulley roof screw:2</div></div>
<svg class="abs" style="left:78px;top:596px" width="25" height="18" viewBox="0 0 25 18"><path d="M0.500 9Q12.500 -6.800 24.500 9Q12.500 24.800 0.500 9Z" fill="#d6d6d6"/><circle cx="12.500" cy="9" r="4.700" fill="#3c4454"/><circle cx="12.500" cy="9" r="3.200" fill="#bdbdbd"/></svg>
<svg class="abs" style="left:117px;top:594px" width="22" height="22" viewBox="0 0 22 22"><path d="M0 5.500h15v16h-15z" fill="#8ccbf9"/><path d="M0 5.500l6.500-5.500h15l-6.500 5.500z" fill="#b6e0fd"/><path d="M15 5.500l6.500-5.500v15.500l-6.500 6z" fill="#6aaee4"/></svg>
<svg class="abs" style="left:153px;top:593px" width="24" height="24" viewBox="0 0 24 24"><g transform="translate(12 12) rotate(-38)" fill="none" stroke="#d6d6d6" stroke-width="2.200"><rect x="-12.500" y="-4" width="14" height="8" rx="4"/><rect x="-1.500" y="-4" width="14" height="8" rx="4"/></g></svg>
<div class="panelhdr" style="top:979px;height:37px"></div>
<div class="abs cond" style="left:35px;top:989px;font-size:18.6px;line-height:22px;letter-spacing:0.4px;color:#fff">COMMENTS</div>
<svg class="abs" style="left:410px;top:990px" width="16" height="16" viewBox="0 0 16 16"><path d="M6.300 1h2.400v5.300h5.300v2.400h-5.300v5.300h-2.400v-5.300h-5.300v-2.400h5.300z" fill="#9aa0ad"/></svg>
<div class="abs" style="left:769px;top:977px;width:359px;height:36px;background:#3c4454;border-right:1px solid #232a36;border-bottom:1px solid #2c3442"></div>
<svg class="abs" style="left:0;top:970px" width="1900" height="52" viewBox="0 970 1900 52"><ellipse cx="784.800" cy="994.400" rx="11.300" ry="5.900" fill="none" stroke="#fff" stroke-width="1.500"/><path d="M781.500 986.500h7v5h-7z" fill="#3c4454"/><path d="M784.900 983v14.600M784.900 1002.200v5.500" stroke="#5fb4f3" stroke-width="2"/><path d="M788.600 990.700l3.600-2.300-.3 4.400z" fill="#fff"/><path d="M788 989.300q3 .6 5.300 1.900" stroke="#fff" stroke-width="1.500" fill="none"/><path d="M805.9 992.0h9l-4.500 5.400z" fill="#9aa0ad"/><path d="M826.700 990.400l6.600-6.400v4.300l10-2.100v4.400z" fill="#c2c2c2"/><path d="M825.800 991h21.200v15.400h-21.200z" fill="#eaeaea"/><path d="M829.400 994.400h14.400v8.100h-14.400z" fill="#8ccbf9" stroke="#2a3140" stroke-width="1"/><path d="M873.500 1007.700L870 1003.500L863.800 998.600L865.500 996.800L870.700 1000.200L869.300 994L867.500 986.500L868.800 985.200L870.200 986.200L872.800 995L873.800 984.200L875 983.200L876.300 984.200L876.900 995L879.300 985.500L880.500 984.700L881.700 985.800L880.900 996.500L885.500 989.200L887 988.800L887.800 990.300L884.200 1000L881.500 1007.700Z" fill="#dcdcdc" stroke="#dcdcdc" stroke-width="1.300" stroke-linejoin="round"/><path d="M913.500 1000.500l7.500 6" stroke="#d9a557" stroke-width="2.200" stroke-linecap="round"/><circle cx="909" cy="995.600" r="6.300" fill="#5b6374" stroke="#fff" stroke-width="1.600"/><path d="M920.300 986.200h6.600M923.600 983v6.400M920.300 992.600h6.600" stroke="#fff" stroke-width="1.300"/><rect x="941.500" y="984" width="23.600" height="23.600" fill="none" stroke="#fff" stroke-width="1.400" stroke-dasharray="3 2"/><path d="M958 1001l6.500 5.500" stroke="#b8863b" stroke-width="2.400" stroke-linecap="round"/><circle cx="951.200" cy="993.800" r="9" fill="#5b6374" stroke="#f0f0f0" stroke-width="1.400"/><path d="M973.9 992.0h9l-4.500 5.400z" fill="#9aa0ad"/><rect x="993" y="987" width="21.600" height="15" fill="#bdbdbd" stroke="#ececec" stroke-width="1.400"/><path d="M1000.500 1003h6.500v2h3.500v1.500h-13.500v-1.500h3.500z" fill="#ececec"/><path d="M1021.1 992.0h9l-4.500 5.400z" fill="#9aa0ad"/><path d="M1039.700 984.300h19v19h-19zM1046 984.300v19M1052.400 984.300v19M1039.700 990.600h19M1039.700 997h19" fill="none" stroke="#e8e8e8" stroke-width="1.300"/><path d="M1066.9 992.0h9l-4.500 5.400z" fill="#9aa0ad"/><rect x="1085.0" y="984.6" width="11" height="9" fill="#d4d4d4"/><rect x="1087.5" y="987.1" width="6" height="4" fill="#c0c0c0" stroke="#f0f0f0" stroke-width="0.800"/><rect x="1098.0" y="984.6" width="11" height="9" fill="#d4d4d4"/><rect x="1100.5" y="987.1" width="6" height="4" fill="#c0c0c0" stroke="#f0f0f0" stroke-width="0.800"/><rect x="1085.0" y="995.4" width="11" height="9" fill="#d4d4d4"/><rect x="1087.5" y="997.9" width="6" height="4" fill="#c0c0c0" stroke="#f0f0f0" stroke-width="0.800"/><rect x="1098.0" y="995.4" width="11" height="9" fill="#d4d4d4"/><rect x="1100.5" y="997.9" width="6" height="4" fill="#c0c0c0" stroke="#f0f0f0" stroke-width="0.800"/><path d="M1113.9 992.0h9l-4.500 5.400z" fill="#9aa0ad"/></svg>
<svg class="abs" style="left:1864px;top:986px" width="24" height="24" viewBox="0 0 24 24"><path d="M12 1.500a10.500 10.500 0 1 0 0 21h10.500v-10.500a10.500 10.500 0 0 0-10.500-10.500z" fill="#000"/><path d="M4.600 13.600l12.800-7.800M5.600 16l13-7.600M13 16.400l6.200-3.600" stroke="#fff" stroke-width="1.300"/><circle cx="18" cy="16.800" r=".8" fill="#fff"/></svg>
<div id="timeline" class="abs"></div>
<svg class="abs" style="left:0;top:1022px" width="1900" height="71" viewBox="0 1022 1900 71"><g fill="#a1a6b3"><path d="M3.800 1049.700h2v18.900h-2zM20.700 1049.700v18.900l-14.600-9.450zM55.600 1050.700v17l-15.900-8.500zM56.200 1055h2.500v8.400h-2.500zM78.800 1047.200l18 11-18 11zM114.200 1055h2.700v8.400h-2.700zM118.200 1050.700l15.800 8.500-15.800 8.500zM154 1049.700l14.600 9.450-14.600 9.450zM168.800 1049.700h2.200v18.900h-2.200z"/></g><g transform="translate(0.0 0)"><path d="M210.500 1047.800h14M208 1050v14.500M226.800 1050v7M210.500 1066.500h7" stroke="#e8e8e8" stroke-width="1.300" fill="none"/><path d="M206 1045.800h3.400v3.400h-3.400zM225.300 1045.800h3.400v3.400h-3.400zM206 1065h3.400v3.400h-3.400z" fill="#5fb4f3"/><path d="M218.200 1069.800l1.800-4.600 2.800 2.600z" fill="#f2f2f2"/><path d="M220 1065.200l6.300-5.900 2.800 2.700-6.300 5.800z" fill="#f5c96b"/><path d="M226.300 1059.300l1.200-1.100a1.900 1.900 0 0 1 2.800 2.700l-1.200 1.100z" fill="#f05a5a"/></g><g transform="translate(0.0 0)"><polygon points="242.2,1066.3 255.2,1066.3 255.2,1069.7 242.2,1069.7" fill="#f3f3f3"/><polygon points="255.2,1066.3 259.7,1062.8 259.7,1066.2 255.2,1069.7" fill="#bdbdbd"/><polygon points="242.2,1050.5 255.2,1050.5 255.2,1065.3 242.2,1065.3" fill="#8ccbf9"/><polygon points="242.2,1050.5 246.3,1046.1 259.7,1046.1 255.2,1050.5" fill="#b6e0fd"/><polygon points="255.2,1050.5 259.7,1046.1 259.7,1062.2 255.2,1065.3" fill="#6aaee4"/><path d="M264.100 1065.300v-16" stroke="#fff" stroke-width="1.300"/><path d="M262.200 1050l1.900-3.400 1.900 3.400z" fill="#fff"/></g><g transform="translate(72.1 0)"><path d="M210.500 1047.800h14M208 1050v14.500M226.800 1050v7M210.500 1066.500h7" stroke="#e8e8e8" stroke-width="1.300" fill="none"/><path d="M206 1045.800h3.400v3.400h-3.400zM225.300 1045.800h3.400v3.400h-3.400zM206 1065h3.400v3.400h-3.400z" fill="#5fb4f3"/><path d="M218.200 1069.800l1.800-4.600 2.800 2.600z" fill="#f2f2f2"/><path d="M220 1065.200l6.300-5.900 2.800 2.700-6.300 5.800z" fill="#f5c96b"/><path d="M226.300 1059.300l1.200-1.100a1.900 1.900 0 0 1 2.800 2.700l-1.200 1.100z" fill="#f05a5a"/></g><g transform="translate(-0.0 0)"><polygon points="314.0,1052.6 331.8,1052.6 331.8,1069.7 314.0,1069.7" fill="#dcdcdc"/><polygon points="314.0,1052.6 320.2,1046.1 338.0,1046.1 331.8,1052.6" fill="#f3f3f3"/><polygon points="331.8,1052.6 338.0,1046.1 338.0,1063.5 331.8,1069.7" fill="#bdbdbd"/><circle cx="323" cy="1061" r="5.400" fill="#8ccbf9" stroke="#2a3140" stroke-width="1"/><path d="M322.500 1055.700q.5 5.800 5.700 6.800a5.400 5.400 0 0 0-5.700-6.800z" fill="#3c4454"/></g><g transform="translate(144.1 0)"><path d="M210.500 1047.800h14M208 1050v14.500M226.800 1050v7M210.500 1066.500h7" stroke="#e8e8e8" stroke-width="1.300" fill="none"/><path d="M206 1045.800h3.400v3.400h-3.400zM225.300 1045.800h3.400v3.400h-3.400zM206 1065h3.400v3.400h-3.400z" fill="#5fb4f3"/><path d="M218.200 1069.800l1.800-4.600 2.800 2.600z" fill="#f2f2f2"/><path d="M220 1065.200l6.300-5.900 2.800 2.700-6.300 5.800z" fill="#f5c96b"/><path d="M226.300 1059.300l1.200-1.100a1.900 1.900 0 0 1 2.800 2.700l-1.200 1.100z" fill="#f05a5a"/></g><g transform="translate(144.2 0)"><polygon points="242.2,1066.3 255.2,1066.3 255.2,1069.7 242.2,1069.7" fill="#f3f3f3"/><polygon points="255.2,1066.3 259.7,1062.8 259.7,1066.2 255.2,1069.7" fill="#bdbdbd"/><polygon points="242.2,1050.5 255.2,1050.5 255.2,1065.3 242.2,1065.3" fill="#8ccbf9"/><polygon points="242.2,1050.5 246.3,1046.1 259.7,1046.1 255.2,1050.5" fill="#b6e0fd"/><polygon points="255.2,1050.5 259.7,1046.1 259.7,1062.2 255.2,1065.3" fill="#6aaee4"/><path d="M264.100 1065.300v-16" stroke="#fff" stroke-width="1.300"/><path d="M262.200 1050l1.900-3.400 1.900 3.400z" fill="#fff"/></g><g transform="translate(-0.0 0)"><polygon points="422.2,1053.9 429.0,1053.9 429.0,1069.7 422.2,1069.7" fill="#dcdcdc"/><polygon points="422.2,1053.9 430.4,1046.1 436.5,1046.1 429.0,1053.9" fill="#f3f3f3"/><polygon points="429.3,1053.9 436.9,1046.4 436.9,1062.2 429.3,1069.7" fill="#7ed89e"/><polygon points="438.3,1053.3 446.1,1046.1 446.1,1061.7 438.3,1069.4" fill="#f5b183"/></g><g transform="translate(252.2 0)"><path d="M210.500 1047.800h14M208 1050v14.500M226.800 1050v7M210.500 1066.500h7" stroke="#e8e8e8" stroke-width="1.300" fill="none"/><path d="M206 1045.800h3.400v3.400h-3.400zM225.300 1045.800h3.400v3.400h-3.400zM206 1065h3.400v3.400h-3.400z" fill="#5fb4f3"/><path d="M218.200 1069.800l1.800-4.600 2.800 2.600z" fill="#f2f2f2"/><path d="M220 1065.200l6.300-5.900 2.800 2.700-6.300 5.800z" fill="#f5c96b"/><path d="M226.300 1059.300l1.200-1.100a1.900 1.900 0 0 1 2.800 2.700l-1.200 1.100z" fill="#f05a5a"/></g><g transform="translate(252.2 0)"><polygon points="242.2,1066.3 255.2,1066.3 255.2,1069.7 242.2,1069.7" fill="#f3f3f3"/><polygon points="255.2,1066.3 259.7,1062.8 259.7,1066.2 255.2,1069.7" fill="#bdbdbd"/><polygon points="242.2,1050.5 255.2,1050.5 255.2,1065.3 242.2,1065.3" fill="#8ccbf9"/><polygon points="242.2,1050.5 246.3,1046.1 259.7,1046.1 255.2,1050.5" fill="#b6e0fd"/><polygon points="255.2,1050.5 259.7,1046.1 259.7,1062.2 255.2,1065.3" fill="#6aaee4"/><path d="M264.100 1065.300v-16" stroke="#fff" stroke-width="1.300"/><path d="M262.200 1050l1.900-3.400 1.900 3.400z" fill="#fff"/></g><g transform="translate(324.3 0)"><path d="M210.500 1047.800h14M208 1050v14.500M226.800 1050v7M210.500 1066.500h7" stroke="#e8e8e8" stroke-width="1.300" fill="none"/><path d="M206 1045.800h3.400v3.400h-3.400zM225.300 1045.800h3.400v3.400h-3.400zM206 1065h3.400v3.400h-3.400z" fill="#5fb4f3"/><path d="M218.200 1069.800l1.800-4.600 2.800 2.600z" fill="#f2f2f2"/><path d="M220 1065.200l6.300-5.900 2.800 2.700-6.300 5.800z" fill="#f5c96b"/><path d="M226.300 1059.300l1.200-1.100a1.900 1.900 0 0 1 2.800 2.700l-1.200 1.100z" fill="#f05a5a"/></g><g transform="translate(252.2 0)"><polygon points="314.0,1052.6 331.8,1052.6 331.8,1069.7 314.0,1069.7" fill="#dcdcdc"/><polygon points="314.0,1052.6 320.2,1046.1 338.0,1046.1 331.8,1052.6" fill="#f3f3f3"/><polygon points="331.8,1052.6 338.0,1046.1 338.0,1063.5 331.8,1069.7" fill="#bdbdbd"/><circle cx="323" cy="1061" r="5.400" fill="#8ccbf9" stroke="#2a3140" stroke-width="1"/><path d="M322.500 1055.700q.5 5.800 5.700 6.800a5.400 5.400 0 0 0-5.700-6.800z" fill="#3c4454"/></g><g transform="translate(0.0 0)"><polygon points="603.7,1051.5 619.0,1051.5 619.0,1068.5 603.7,1068.5" fill="#dcdcdc"/><polygon points="603.7,1051.5 609.0,1046.5 624.4,1046.5 619.0,1051.5" fill="#f3f3f3"/><polygon points="619.0,1051.5 624.4,1046.5 624.4,1063.3 619.0,1068.5" fill="#bdbdbd"/><g transform="translate(611.500 1060.200) rotate(-38)" fill="none" stroke="#7a7a7a" stroke-width="1.500"><rect x="-6.500" y="-2.300" width="7.500" height="4.600" rx="2.300"/><rect x="-1" y="-2.300" width="7.500" height="4.600" rx="2.300"/></g></g><g transform="translate(36.1 0)"><polygon points="603.7,1051.5 619.0,1051.5 619.0,1068.5 603.7,1068.5" fill="#dcdcdc"/><polygon points="603.7,1051.5 609.0,1046.5 624.4,1046.5 619.0,1051.5" fill="#f3f3f3"/><polygon points="619.0,1051.5 624.4,1046.5 624.4,1063.3 619.0,1068.5" fill="#bdbdbd"/><g transform="translate(611.500 1060.200) rotate(-38)" fill="none" stroke="#7a7a7a" stroke-width="1.500"><rect x="-6.500" y="-2.300" width="7.500" height="4.600" rx="2.300"/><rect x="-1" y="-2.300" width="7.500" height="4.600" rx="2.300"/></g></g><g transform="translate(-0.0 0)"><polygon points="673.7,1059.9 682.5,1059.9 682.5,1069.8 673.7,1069.8" fill="#dcdcdc"/><polygon points="687.1,1046.0 697.0,1046.0 697.0,1056.1 687.1,1056.1" fill="#8ccbf9"/><path d="M685 1046v23.800" stroke="#e06a6a" stroke-width="1.300"/></g><g transform="translate(36.0 0)"><polygon points="673.7,1059.9 682.5,1059.9 682.5,1069.8 673.7,1069.8" fill="#dcdcdc"/><polygon points="687.1,1046.0 697.0,1046.0 697.0,1056.1 687.1,1056.1" fill="#8ccbf9"/><path d="M685 1046v23.800" stroke="#e06a6a" stroke-width="1.300"/></g><g transform="translate(144.1 0)"><polygon points="603.7,1051.5 619.0,1051.5 619.0,1068.5 603.7,1068.5" fill="#dcdcdc"/><polygon points="603.7,1051.5 609.0,1046.5 624.4,1046.5 619.0,1051.5" fill="#f3f3f3"/><polygon points="619.0,1051.5 624.4,1046.5 624.4,1063.3 619.0,1068.5" fill="#bdbdbd"/><g transform="translate(611.500 1060.200) rotate(-38)" fill="none" stroke="#7a7a7a" stroke-width="1.500"><rect x="-6.500" y="-2.300" width="7.500" height="4.600" rx="2.300"/><rect x="-1" y="-2.300" width="7.500" height="4.600" rx="2.300"/></g></g><g transform="translate(108.1 0)"><polygon points="673.7,1059.9 682.5,1059.9 682.5,1069.8 673.7,1069.8" fill="#dcdcdc"/><polygon points="687.1,1046.0 697.0,1046.0 697.0,1056.1 687.1,1056.1" fill="#8ccbf9"/><path d="M685 1046v23.800" stroke="#e06a6a" stroke-width="1.300"/></g><path d="M217 1083.400H796.200M219.6 1074V1083.400M254.3 1074V1083.400M290.4 1074V1083.400M326.4 1074V1083.400M362.4 1074V1083.400M398.5 1074V1083.400M434.5 1074V1083.400M470.5 1074V1083.400M506.5 1074V1083.400M542.6 1074V1083.400M578.6 1074V1083.400M614.6 1074V1083.400M650.7 1074V1083.400M686.7 1074V1083.400M722.7 1074V1083.400M758.8 1074V1083.400M794.8 1074V1083.400" stroke="#5c6779" stroke-width="2.700" fill="none"/><path d="M803 1037.200h18v6.500q-.5 2.500-5 4.500l-2.100 1.500v34.700h-3.300v-34.700l-2.100-1.500q-4.500-2-5.500-4.500z" fill="#c9cbd1"/><path d="M1887.4 1056.8 L1887.4 1060.8 L1884.1 1061.1 L1883.3 1063.0 L1885.4 1065.6 L1882.6 1068.4 L1880.0 1066.3 L1878.1 1067.1 L1877.8 1070.4 L1873.8 1070.4 L1873.5 1067.1 L1871.6 1066.3 L1869.0 1068.4 L1866.2 1065.6 L1868.3 1063.0 L1867.5 1061.1 L1864.2 1060.8 L1864.2 1056.8 L1867.5 1056.5 L1868.3 1054.6 L1866.2 1052.0 L1869.0 1049.2 L1871.6 1051.3 L1873.5 1050.5 L1873.8 1047.2 L1877.8 1047.2 L1878.1 1050.5 L1880.0 1051.3 L1882.6 1049.2 L1885.4 1052.0 L1883.3 1054.6 L1884.1 1056.5 Z M1875.8 1054.5 a4.300 4.300 0 1 0 0.010 0z" fill="#a1a6b3" fill-rule="evenodd"/></svg>
</body></html>
